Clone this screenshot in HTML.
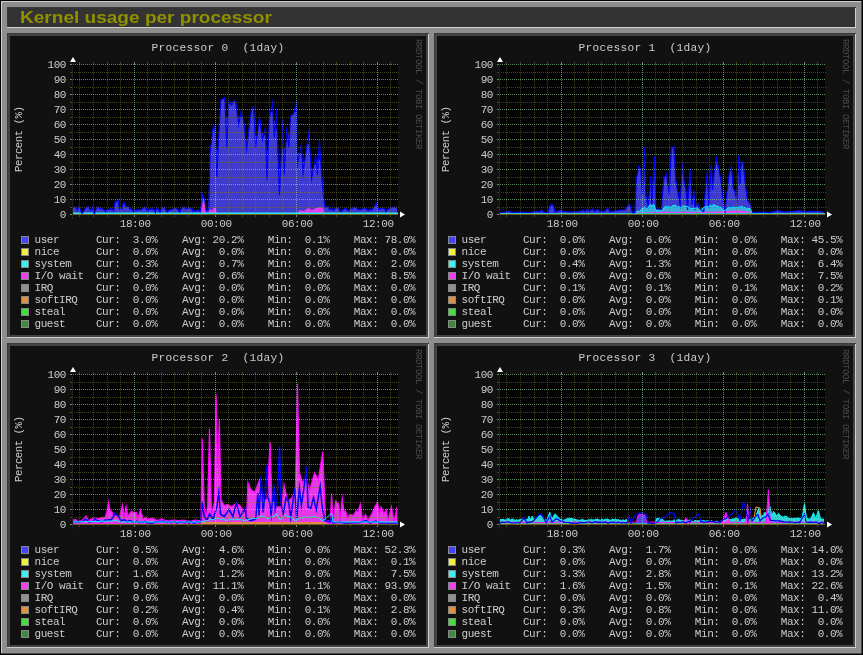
<!DOCTYPE html>
<html><head><meta charset="utf-8"><style>
html,body{margin:0;padding:0;background:#000;width:863px;height:655px;overflow:hidden}
svg.main{display:block;will-change:transform}
text{font-family:"Liberation Mono",monospace}
</style></head><body>
<svg class="main" width="863" height="655" viewBox="0 0 863 655">
<rect x="0" y="0" width="863" height="655" fill="#000"/>
<rect x="1" y="1" width="861" height="653" fill="#8e8e8e"/>
<rect x="1" y="1" width="860" height="1" fill="#cfcfcf"/>
<rect x="1" y="1" width="1" height="652" fill="#cfcfcf"/>
<rect x="861" y="1" width="1" height="653" fill="#4a4a4a"/>
<rect x="1" y="653" width="861" height="1" fill="#4a4a4a"/>
<rect x="7" y="7" width="849" height="21" fill="#333333"/>
<rect x="7" y="7" width="849" height="1" fill="#3a3a3a"/>
<rect x="7" y="7" width="1" height="21" fill="#3a3a3a"/>
<rect x="7" y="27" width="849" height="1" fill="#cfcfcf"/>
<rect x="855" y="8" width="1" height="20" fill="#cfcfcf"/>
<text transform="translate(20,23) scale(1.095,1)" x="0" y="0" style="font-family:'Liberation Sans',sans-serif" font-weight="bold" font-size="17.4" fill="#919100">Kernel usage per processor</text>
<rect x="7" y="33" width="422" height="305" fill="#444444"/>
<rect x="7" y="33" width="422" height="1" fill="#3a3a3a"/>
<rect x="7" y="33" width="1" height="305" fill="#3a3a3a"/>
<rect x="7" y="337" width="422" height="1" fill="#cfcfcf"/>
<rect x="428" y="34" width="1" height="304" fill="#cfcfcf"/>
<rect x="10" y="36" width="416" height="299" fill="#111111"/>
<rect x="73" y="64" width="325" height="151" fill="#030303"/>
<svg x="73" y="63" width="325" height="152" viewBox="73 63 325 152" overflow="hidden">
<polygon points="73.0,215.0 73.0,206.0 73.0,207.0 74.5,207.4 75.7,207.4 76.0,208.0 77.3,210.3 77.5,209.6 79.0,206.6 79.3,207.0 80.5,210.1 82.0,213.5 82.2,213.5 83.5,211.1 84.6,209.5 85.0,208.9 86.5,206.9 87.4,207.0 88.0,206.3 89.5,208.8 90.3,210.3 91.0,209.6 92.5,207.1 92.7,208.2 94.0,213.3 94.3,214.0 95.5,210.1 96.8,207.8 97.0,206.9 98.5,206.6 100.0,208.9 101.5,208.4 102.4,208.2 103.0,209.4 104.5,210.3 105.7,211.5 106.0,210.0 107.5,210.0 109.0,209.6 110.5,208.0 111.4,208.7 112.0,209.8 113.5,209.5 113.8,210.3 115.0,202.6 115.4,201.4 116.5,201.4 117.9,200.5 118.0,199.9 119.5,209.4 119.5,208.7 121.0,208.5 121.9,209.0 122.5,206.3 123.5,202.2 124.0,202.5 125.5,205.7 126.0,207.0 127.0,206.4 128.5,206.6 130.0,209.0 130.8,208.7 131.5,208.5 133.0,211.2 134.0,211.9 134.5,210.5 136.0,210.9 137.3,209.0 137.5,209.7 139.0,209.9 140.0,210.0 140.5,210.0 142.0,208.7 143.5,208.1 144.5,207.2 145.0,206.7 146.5,209.4 147.3,210.8 148.0,210.9 149.5,208.6 151.0,209.4 152.2,208.0 152.5,209.0 154.0,210.0 155.4,212.4 155.5,211.5 157.0,207.6 157.0,208.0 158.5,209.6 159.5,211.6 160.0,212.0 161.5,209.2 163.0,207.1 163.9,207.6 164.5,207.2 166.0,210.4 166.8,211.2 167.5,211.8 169.0,210.1 170.0,210.0 170.5,209.5 172.0,209.0 173.5,208.9 174.0,208.4 175.0,207.6 176.5,208.7 177.3,208.8 178.0,209.6 179.5,211.7 179.7,212.0 181.0,209.3 182.5,207.3 183.4,207.2 184.0,206.8 185.5,208.8 187.0,208.2 187.0,208.8 188.5,208.4 190.0,207.4 190.3,208.0 191.5,208.2 192.7,210.8 193.0,209.5 194.5,211.1 196.0,210.9 197.5,209.9 198.4,210.4 199.0,210.9 200.4,211.6 200.5,210.9 202.0,199.0 202.5,194.2 203.5,197.2 204.9,199.5 205.0,199.9 206.1,210.0 206.5,210.7 208.0,210.0 208.1,209.2 208.1,202.6 208.6,202.6 209.1,175.3 209.6,175.3 210.1,152.6 210.6,148.3 211.1,144.0 211.6,139.7 212.1,135.4 212.6,131.1 213.1,128.5 213.6,128.5 214.1,128.5 214.6,128.5 215.1,128.5 215.6,142.8 216.1,149.5 216.6,149.5 217.1,149.5 217.6,149.5 218.1,149.5 218.6,138.9 219.1,129.5 219.6,120.8 220.1,112.1 220.6,103.5 221.1,99.8 221.6,99.5 222.1,99.2 222.6,98.9 223.1,98.9 223.6,98.9 224.1,98.9 224.6,98.9 225.1,105.0 225.6,117.5 226.1,117.5 226.6,117.5 227.1,117.5 227.6,117.5 228.1,117.3 228.6,105.7 229.1,104.2 229.6,104.2 230.1,104.0 230.6,103.5 231.1,102.8 231.6,102.8 232.1,102.8 232.6,102.7 233.1,101.5 233.6,101.5 234.1,101.5 234.6,101.5 235.1,101.5 235.6,101.9 236.1,105.0 236.6,108.8 237.1,112.6 237.6,116.4 238.1,116.8 238.6,116.8 239.1,116.8 239.6,116.8 240.1,116.8 240.6,116.7 241.1,116.7 241.6,116.7 242.1,116.7 242.6,116.7 243.1,118.3 243.6,119.8 244.1,124.8 244.6,129.7 245.1,134.7 245.6,139.7 246.1,139.7 246.6,139.7 247.1,139.7 247.6,139.7 248.1,136.2 248.6,131.7 249.1,127.9 249.6,124.1 250.1,120.3 250.6,116.5 251.1,112.7 251.6,108.9 252.1,108.9 252.6,108.9 253.1,108.9 253.6,108.9 254.1,117.1 254.6,127.2 255.1,135.8 255.6,135.8 256.1,135.8 256.6,135.8 257.1,135.8 257.6,131.8 258.1,127.9 258.6,125.2 259.1,125.2 259.6,125.2 260.1,125.2 260.6,125.2 261.1,129.0 261.6,132.8 262.1,133.3 262.6,133.3 263.1,133.3 263.6,133.3 264.1,135.2 264.6,135.2 265.1,135.2 265.6,135.2 266.1,149.9 266.6,149.9 267.1,149.9 267.6,149.9 268.1,149.9 268.6,139.1 269.1,127.3 269.6,117.3 270.1,114.7 270.6,112.1 271.1,112.1 271.6,112.1 272.1,112.1 272.6,112.1 273.1,115.1 273.6,120.4 274.1,120.4 274.6,120.4 275.1,123.8 275.6,127.6 276.1,129.0 276.6,129.0 277.1,129.0 277.6,143.4 278.1,157.8 278.6,169.0 279.1,169.0 279.6,169.0 280.1,169.0 280.6,169.0 281.1,158.1 281.6,148.8 282.1,148.8 282.6,148.8 283.1,148.8 283.6,148.2 284.1,148.2 284.6,148.2 285.1,148.2 285.6,148.2 286.1,141.6 286.6,141.6 287.1,141.0 287.6,138.8 288.1,136.6 288.6,132.7 289.1,132.7 289.6,132.7 290.1,124.3 290.6,116.0 291.1,115.7 291.6,115.3 292.1,115.0 292.6,114.6 293.1,114.3 293.6,113.6 294.1,111.7 294.6,111.7 295.1,111.7 295.6,111.7 296.1,111.7 296.6,122.0 297.1,152.7 297.6,153.1 298.1,153.1 298.6,153.1 299.1,153.1 299.6,153.1 300.1,153.1 300.6,153.1 301.1,153.1 301.6,153.1 302.1,158.0 302.6,161.7 303.1,161.7 303.6,161.7 304.1,161.7 304.6,161.7 305.1,158.1 305.6,154.4 306.1,150.8 306.6,147.6 307.1,144.3 307.6,144.3 308.1,144.3 308.6,144.3 309.1,144.3 309.6,145.8 310.1,153.6 310.6,161.4 311.1,169.1 311.6,169.1 312.1,169.1 312.6,169.1 313.1,169.1 313.6,167.2 314.1,164.3 314.6,164.3 315.1,164.3 315.6,164.3 316.1,163.7 316.6,161.3 317.1,160.5 317.6,160.5 318.1,160.5 318.6,159.5 319.1,159.5 319.6,159.5 320.1,159.5 320.6,159.5 321.1,167.6 321.6,174.3 322.1,180.2 322.6,186.1 323.1,192.0 323.6,197.9 324.1,197.9 324.6,203.8 325.1,203.8 325.1,207.9 325.1,207.2 326.6,206.7 328.1,206.9 329.3,208.7 329.6,209.7 331.1,208.6 332.6,209.3 333.0,210.6 334.1,209.8 335.6,207.9 337.1,207.9 337.1,207.3 338.6,207.9 340.1,211.0 341.3,211.5 341.6,210.5 343.1,209.6 344.6,208.9 345.0,207.8 346.1,208.8 347.6,210.4 348.7,210.6 349.1,210.5 350.6,208.0 352.1,208.8 353.4,207.3 353.6,207.3 355.1,207.3 356.6,207.7 358.1,209.9 358.9,209.7 359.6,209.4 361.1,209.7 362.6,208.8 364.1,208.7 364.5,207.8 365.6,208.5 367.1,209.9 368.2,210.6 368.6,210.4 370.1,209.0 371.6,209.9 372.8,208.7 373.1,207.5 374.6,205.8 376.1,203.4 376.1,202.7 377.6,207.3 378.4,209.7 379.1,208.3 380.6,209.0 382.1,207.9 382.1,207.8 383.6,208.3 385.1,209.5 385.8,211.5 386.6,210.6 388.1,208.3 389.6,209.1 390.4,207.8 391.1,207.5 392.6,207.3 394.1,206.9 395.1,207.3 395.6,207.5 397.0,207.8 397.0,215.0" fill="#4641e6" fill-opacity="0.9"/>
<polygon points="200.0,215.0 200.0,214.0 202.0,205.0 203.5,199.0 205.0,206.0 206.0,214.0 206.0,215.0" fill="#f03cf0" fill-opacity="0.95"/>
<polygon points="208.0,215.0 208.0,214.0 210.0,209.0 212.0,211.0 214.0,207.0 216.0,209.0 217.0,214.0 217.0,215.0" fill="#f03cf0" fill-opacity="0.95"/>
<polygon points="296.0,215.0 296.0,214.0 300.0,210.0 304.0,211.0 308.0,208.0 312.0,210.0 316.0,208.0 320.0,207.0 323.0,208.0 325.0,214.0 325.0,215.0" fill="#f03cf0" fill-opacity="0.95"/>
<rect x="73" y="212" width="325" height="1" fill="rgba(48,232,232,0.5)"/>
<rect x="73" y="213" width="325" height="1" fill="#30e8e8"/>
<polyline points="73.0,206.0 73.0,207.0 74.5,207.4 75.7,207.4 76.0,208.0 77.3,210.3 77.5,209.6 79.0,206.6 79.3,207.0 80.5,210.1 82.0,213.5 82.2,213.5 83.5,211.1 84.6,209.5 85.0,208.9 86.5,206.9 87.4,207.0 88.0,206.3 89.5,208.8 90.3,210.3 91.0,209.6 92.5,207.1 92.7,208.2 94.0,213.3 94.3,214.0 95.5,210.1 96.8,207.8 97.0,206.9 98.5,206.6 100.0,208.9 101.5,208.4 102.4,208.2 103.0,209.4 104.5,210.3 105.7,211.5 106.0,210.0 107.5,210.0 109.0,209.6 110.5,208.0 111.4,208.7 112.0,209.8 113.5,209.5 113.8,210.3 115.0,202.6 115.4,201.4 116.5,201.4 117.9,200.5 118.0,199.9 119.5,209.4 119.5,208.7 121.0,208.5 121.9,209.0 122.5,206.3 123.5,202.2 124.0,202.5 125.5,205.7 126.0,207.0 127.0,206.4 128.5,206.6 130.0,209.0 130.8,208.7 131.5,208.5 133.0,211.2 134.0,211.9 134.5,210.5 136.0,210.9 137.3,209.0 137.5,209.7 139.0,209.9 140.0,210.0 140.5,210.0 142.0,208.7 143.5,208.1 144.5,207.2 145.0,206.7 146.5,209.4 147.3,210.8 148.0,210.9 149.5,208.6 151.0,209.4 152.2,208.0 152.5,209.0 154.0,210.0 155.4,212.4 155.5,211.5 157.0,207.6 157.0,208.0 158.5,209.6 159.5,211.6 160.0,212.0 161.5,209.2 163.0,207.1 163.9,207.6 164.5,207.2 166.0,210.4 166.8,211.2 167.5,211.8 169.0,210.1 170.0,210.0 170.5,209.5 172.0,209.0 173.5,208.9 174.0,208.4 175.0,207.6 176.5,208.7 177.3,208.8 178.0,209.6 179.5,211.7 179.7,212.0 181.0,209.3 182.5,207.3 183.4,207.2 184.0,206.8 185.5,208.8 187.0,208.2 187.0,208.8 188.5,208.4 190.0,207.4 190.3,208.0 191.5,208.2 192.7,210.8 193.0,209.5 194.5,211.1 196.0,210.9 197.5,209.9 198.4,210.4 199.0,210.9 200.4,211.6 200.5,210.9 202.0,199.0 202.5,194.2 203.5,197.2 204.9,199.5 205.0,199.9 206.1,210.0 206.5,210.7 208.0,210.0 208.1,209.2 209.0,208.0 210.0,153.5 213.0,127.7 215.0,125.7 216.8,177.0 218.8,134.7 220.8,100.0 224.8,97.5 226.8,147.6 228.8,101.0 231.7,105.0 233.7,100.0 235.7,102.0 238.7,124.7 241.0,111.8 243.6,119.8 246.6,149.6 248.6,131.7 251.6,108.9 253.6,106.9 255.6,147.6 259.5,116.8 262.5,139.6 265.5,127.7 266.9,179.4 269.5,117.8 272.4,102.9 274.4,137.7 276.4,108.9 279.4,195.2 282.9,118.8 284.2,174.6 286.7,127.5 288.7,147.7 290.6,116.0 293.5,114.0 296.3,103.5 297.3,165.0 301.2,144.8 303.1,172.7 306.0,151.5 308.8,133.3 311.7,178.5 315.6,155.4 317.5,174.6 319.4,140.0 321.3,170.8 324.2,205.0 325.1,207.2 325.1,207.9 325.1,207.2 326.6,206.7 328.1,206.9 329.3,208.7 329.6,209.7 331.1,208.6 332.6,209.3 333.0,210.6 334.1,209.8 335.6,207.9 337.1,207.9 337.1,207.3 338.6,207.9 340.1,211.0 341.3,211.5 341.6,210.5 343.1,209.6 344.6,208.9 345.0,207.8 346.1,208.8 347.6,210.4 348.7,210.6 349.1,210.5 350.6,208.0 352.1,208.8 353.4,207.3 353.6,207.3 355.1,207.3 356.6,207.7 358.1,209.9 358.9,209.7 359.6,209.4 361.1,209.7 362.6,208.8 364.1,208.7 364.5,207.8 365.6,208.5 367.1,209.9 368.2,210.6 368.6,210.4 370.1,209.0 371.6,209.9 372.8,208.7 373.1,207.5 374.6,205.8 376.1,203.4 376.1,202.7 377.6,207.3 378.4,209.7 379.1,208.3 380.6,209.0 382.1,207.9 382.1,207.8 383.6,208.3 385.1,209.5 385.8,211.5 386.6,210.6 388.1,208.3 389.6,209.1 390.4,207.8 391.1,207.5 392.6,207.3 394.1,206.9 395.1,207.3 395.6,207.5 397.0,207.8" fill="none" stroke="#0000f0" stroke-width="1.2" stroke-linejoin="miter" stroke-miterlimit="10"/>
</svg>
<rect x="73" y="214" width="325" height="1" fill="#6e5f19"/>
<g shape-rendering="crispEdges">
<line x1="74" y1="207.5" x2="399" y2="207.5" stroke="rgba(128,126,50,0.5)" stroke-dasharray="1 1"/>
<rect x="70" y="207" width="2" height="1" fill="rgba(128,126,50,0.5)"/>
<line x1="74" y1="192.5" x2="399" y2="192.5" stroke="rgba(128,126,50,0.5)" stroke-dasharray="1 1"/>
<rect x="70" y="192" width="2" height="1" fill="rgba(128,126,50,0.5)"/>
<line x1="74" y1="177.5" x2="399" y2="177.5" stroke="rgba(128,126,50,0.5)" stroke-dasharray="1 1"/>
<rect x="70" y="177" width="2" height="1" fill="rgba(128,126,50,0.5)"/>
<line x1="74" y1="162.5" x2="399" y2="162.5" stroke="rgba(128,126,50,0.5)" stroke-dasharray="1 1"/>
<rect x="70" y="162" width="2" height="1" fill="rgba(128,126,50,0.5)"/>
<line x1="74" y1="147.5" x2="399" y2="147.5" stroke="rgba(128,126,50,0.5)" stroke-dasharray="1 1"/>
<rect x="70" y="147" width="2" height="1" fill="rgba(128,126,50,0.5)"/>
<line x1="74" y1="132.5" x2="399" y2="132.5" stroke="rgba(128,126,50,0.5)" stroke-dasharray="1 1"/>
<rect x="70" y="132" width="2" height="1" fill="rgba(128,126,50,0.5)"/>
<line x1="74" y1="117.5" x2="399" y2="117.5" stroke="rgba(128,126,50,0.5)" stroke-dasharray="1 1"/>
<rect x="70" y="117" width="2" height="1" fill="rgba(128,126,50,0.5)"/>
<line x1="74" y1="102.5" x2="399" y2="102.5" stroke="rgba(128,126,50,0.5)" stroke-dasharray="1 1"/>
<rect x="70" y="102" width="2" height="1" fill="rgba(128,126,50,0.5)"/>
<line x1="74" y1="87.5" x2="399" y2="87.5" stroke="rgba(128,126,50,0.5)" stroke-dasharray="1 1"/>
<rect x="70" y="87" width="2" height="1" fill="rgba(128,126,50,0.5)"/>
<line x1="74" y1="72.5" x2="399" y2="72.5" stroke="rgba(128,126,50,0.5)" stroke-dasharray="1 1"/>
<rect x="70" y="72" width="2" height="1" fill="rgba(128,126,50,0.5)"/>
<line x1="79.5" y1="64" x2="79.5" y2="214" stroke="rgba(128,126,50,0.5)" stroke-dasharray="1 1"/>
<rect x="79" y="62" width="1" height="2" fill="rgba(128,126,50,0.5)"/>
<rect x="79" y="215" width="1" height="2" fill="rgba(128,126,50,0.5)"/>
<line x1="93.5" y1="64" x2="93.5" y2="214" stroke="rgba(128,126,50,0.5)" stroke-dasharray="1 1"/>
<rect x="93" y="62" width="1" height="2" fill="rgba(128,126,50,0.5)"/>
<rect x="93" y="215" width="1" height="2" fill="rgba(128,126,50,0.5)"/>
<line x1="107.5" y1="64" x2="107.5" y2="214" stroke="rgba(128,126,50,0.5)" stroke-dasharray="1 1"/>
<rect x="107" y="62" width="1" height="2" fill="rgba(128,126,50,0.5)"/>
<rect x="107" y="215" width="1" height="2" fill="rgba(128,126,50,0.5)"/>
<line x1="120.5" y1="64" x2="120.5" y2="214" stroke="rgba(128,126,50,0.5)" stroke-dasharray="1 1"/>
<rect x="120" y="62" width="1" height="2" fill="rgba(128,126,50,0.5)"/>
<rect x="120" y="215" width="1" height="2" fill="rgba(128,126,50,0.5)"/>
<line x1="147.5" y1="64" x2="147.5" y2="214" stroke="rgba(128,126,50,0.5)" stroke-dasharray="1 1"/>
<rect x="147" y="62" width="1" height="2" fill="rgba(128,126,50,0.5)"/>
<rect x="147" y="215" width="1" height="2" fill="rgba(128,126,50,0.5)"/>
<line x1="161.5" y1="64" x2="161.5" y2="214" stroke="rgba(128,126,50,0.5)" stroke-dasharray="1 1"/>
<rect x="161" y="62" width="1" height="2" fill="rgba(128,126,50,0.5)"/>
<rect x="161" y="215" width="1" height="2" fill="rgba(128,126,50,0.5)"/>
<line x1="174.5" y1="64" x2="174.5" y2="214" stroke="rgba(128,126,50,0.5)" stroke-dasharray="1 1"/>
<rect x="174" y="62" width="1" height="2" fill="rgba(128,126,50,0.5)"/>
<rect x="174" y="215" width="1" height="2" fill="rgba(128,126,50,0.5)"/>
<line x1="188.5" y1="64" x2="188.5" y2="214" stroke="rgba(128,126,50,0.5)" stroke-dasharray="1 1"/>
<rect x="188" y="62" width="1" height="2" fill="rgba(128,126,50,0.5)"/>
<rect x="188" y="215" width="1" height="2" fill="rgba(128,126,50,0.5)"/>
<line x1="201.5" y1="64" x2="201.5" y2="214" stroke="rgba(128,126,50,0.5)" stroke-dasharray="1 1"/>
<rect x="201" y="62" width="1" height="2" fill="rgba(128,126,50,0.5)"/>
<rect x="201" y="215" width="1" height="2" fill="rgba(128,126,50,0.5)"/>
<line x1="228.5" y1="64" x2="228.5" y2="214" stroke="rgba(128,126,50,0.5)" stroke-dasharray="1 1"/>
<rect x="228" y="62" width="1" height="2" fill="rgba(128,126,50,0.5)"/>
<rect x="228" y="215" width="1" height="2" fill="rgba(128,126,50,0.5)"/>
<line x1="242.5" y1="64" x2="242.5" y2="214" stroke="rgba(128,126,50,0.5)" stroke-dasharray="1 1"/>
<rect x="242" y="62" width="1" height="2" fill="rgba(128,126,50,0.5)"/>
<rect x="242" y="215" width="1" height="2" fill="rgba(128,126,50,0.5)"/>
<line x1="255.5" y1="64" x2="255.5" y2="214" stroke="rgba(128,126,50,0.5)" stroke-dasharray="1 1"/>
<rect x="255" y="62" width="1" height="2" fill="rgba(128,126,50,0.5)"/>
<rect x="255" y="215" width="1" height="2" fill="rgba(128,126,50,0.5)"/>
<line x1="269.5" y1="64" x2="269.5" y2="214" stroke="rgba(128,126,50,0.5)" stroke-dasharray="1 1"/>
<rect x="269" y="62" width="1" height="2" fill="rgba(128,126,50,0.5)"/>
<rect x="269" y="215" width="1" height="2" fill="rgba(128,126,50,0.5)"/>
<line x1="282.5" y1="64" x2="282.5" y2="214" stroke="rgba(128,126,50,0.5)" stroke-dasharray="1 1"/>
<rect x="282" y="62" width="1" height="2" fill="rgba(128,126,50,0.5)"/>
<rect x="282" y="215" width="1" height="2" fill="rgba(128,126,50,0.5)"/>
<line x1="309.5" y1="64" x2="309.5" y2="214" stroke="rgba(128,126,50,0.5)" stroke-dasharray="1 1"/>
<rect x="309" y="62" width="1" height="2" fill="rgba(128,126,50,0.5)"/>
<rect x="309" y="215" width="1" height="2" fill="rgba(128,126,50,0.5)"/>
<line x1="323.5" y1="64" x2="323.5" y2="214" stroke="rgba(128,126,50,0.5)" stroke-dasharray="1 1"/>
<rect x="323" y="62" width="1" height="2" fill="rgba(128,126,50,0.5)"/>
<rect x="323" y="215" width="1" height="2" fill="rgba(128,126,50,0.5)"/>
<line x1="336.5" y1="64" x2="336.5" y2="214" stroke="rgba(128,126,50,0.5)" stroke-dasharray="1 1"/>
<rect x="336" y="62" width="1" height="2" fill="rgba(128,126,50,0.5)"/>
<rect x="336" y="215" width="1" height="2" fill="rgba(128,126,50,0.5)"/>
<line x1="350.5" y1="64" x2="350.5" y2="214" stroke="rgba(128,126,50,0.5)" stroke-dasharray="1 1"/>
<rect x="350" y="62" width="1" height="2" fill="rgba(128,126,50,0.5)"/>
<rect x="350" y="215" width="1" height="2" fill="rgba(128,126,50,0.5)"/>
<line x1="363.5" y1="64" x2="363.5" y2="214" stroke="rgba(128,126,50,0.5)" stroke-dasharray="1 1"/>
<rect x="363" y="62" width="1" height="2" fill="rgba(128,126,50,0.5)"/>
<rect x="363" y="215" width="1" height="2" fill="rgba(128,126,50,0.5)"/>
<line x1="390.5" y1="64" x2="390.5" y2="214" stroke="rgba(128,126,50,0.5)" stroke-dasharray="1 1"/>
<rect x="390" y="62" width="1" height="2" fill="rgba(128,126,50,0.5)"/>
<rect x="390" y="215" width="1" height="2" fill="rgba(128,126,50,0.5)"/>
<line x1="73" y1="199.5" x2="399" y2="199.5" stroke="rgba(160,240,172,0.56)" stroke-dasharray="1 1"/>
<rect x="70" y="199" width="2" height="1" fill="rgba(160,240,172,0.56)"/>
<line x1="73" y1="184.5" x2="399" y2="184.5" stroke="rgba(160,240,172,0.56)" stroke-dasharray="1 1"/>
<rect x="70" y="184" width="2" height="1" fill="rgba(160,240,172,0.56)"/>
<line x1="73" y1="169.5" x2="399" y2="169.5" stroke="rgba(160,240,172,0.56)" stroke-dasharray="1 1"/>
<rect x="70" y="169" width="2" height="1" fill="rgba(160,240,172,0.56)"/>
<line x1="73" y1="154.5" x2="399" y2="154.5" stroke="rgba(160,240,172,0.56)" stroke-dasharray="1 1"/>
<rect x="70" y="154" width="2" height="1" fill="rgba(160,240,172,0.56)"/>
<line x1="73" y1="139.5" x2="399" y2="139.5" stroke="rgba(160,240,172,0.56)" stroke-dasharray="1 1"/>
<rect x="70" y="139" width="2" height="1" fill="rgba(160,240,172,0.56)"/>
<line x1="73" y1="124.5" x2="399" y2="124.5" stroke="rgba(160,240,172,0.56)" stroke-dasharray="1 1"/>
<rect x="70" y="124" width="2" height="1" fill="rgba(160,240,172,0.56)"/>
<line x1="73" y1="109.5" x2="399" y2="109.5" stroke="rgba(160,240,172,0.56)" stroke-dasharray="1 1"/>
<rect x="70" y="109" width="2" height="1" fill="rgba(160,240,172,0.56)"/>
<line x1="73" y1="94.5" x2="399" y2="94.5" stroke="rgba(160,240,172,0.56)" stroke-dasharray="1 1"/>
<rect x="70" y="94" width="2" height="1" fill="rgba(160,240,172,0.56)"/>
<line x1="73" y1="79.5" x2="399" y2="79.5" stroke="rgba(160,240,172,0.56)" stroke-dasharray="1 1"/>
<rect x="70" y="79" width="2" height="1" fill="rgba(160,240,172,0.56)"/>
<line x1="73" y1="64.5" x2="399" y2="64.5" stroke="rgba(160,240,172,0.56)" stroke-dasharray="1 1"/>
<rect x="70" y="64" width="2" height="1" fill="rgba(160,240,172,0.56)"/>
<rect x="70" y="214" width="2" height="1" fill="rgba(160,240,172,0.56)"/>
<line x1="134.5" y1="64" x2="134.5" y2="214" stroke="rgba(160,240,172,0.56)" stroke-dasharray="1 1"/>
<rect x="134" y="62" width="1" height="2" fill="rgba(160,240,172,0.56)"/>
<rect x="134" y="215" width="1" height="2" fill="rgba(160,240,172,0.56)"/>
<line x1="215.5" y1="64" x2="215.5" y2="214" stroke="rgba(160,240,172,0.56)" stroke-dasharray="1 1"/>
<rect x="215" y="62" width="1" height="2" fill="rgba(160,240,172,0.56)"/>
<rect x="215" y="215" width="1" height="2" fill="rgba(160,240,172,0.56)"/>
<line x1="296.5" y1="64" x2="296.5" y2="214" stroke="rgba(160,240,172,0.56)" stroke-dasharray="1 1"/>
<rect x="296" y="62" width="1" height="2" fill="rgba(160,240,172,0.56)"/>
<rect x="296" y="215" width="1" height="2" fill="rgba(160,240,172,0.56)"/>
<line x1="377.5" y1="64" x2="377.5" y2="214" stroke="rgba(160,240,172,0.56)" stroke-dasharray="1 1"/>
<rect x="377" y="62" width="1" height="2" fill="rgba(160,240,172,0.56)"/>
<rect x="377" y="215" width="1" height="2" fill="rgba(160,240,172,0.56)"/>
</g>
<rect x="72" y="66" width="1" height="153" fill="#222"/>
<polygon points="70,62 76,62 73,57" fill="#fff"/>
<polygon points="400,211.5 400,217.5 405,214.5" fill="#fff"/>
<text x="66" y="218" text-anchor="end" font-family="Liberation Mono" font-size="11" letter-spacing="-0.46" fill="#cccccc">0</text>
<text x="66" y="203" text-anchor="end" font-family="Liberation Mono" font-size="11" letter-spacing="-0.46" fill="#cccccc">10</text>
<text x="66" y="188" text-anchor="end" font-family="Liberation Mono" font-size="11" letter-spacing="-0.46" fill="#cccccc">20</text>
<text x="66" y="173" text-anchor="end" font-family="Liberation Mono" font-size="11" letter-spacing="-0.46" fill="#cccccc">30</text>
<text x="66" y="158" text-anchor="end" font-family="Liberation Mono" font-size="11" letter-spacing="-0.46" fill="#cccccc">40</text>
<text x="66" y="143" text-anchor="end" font-family="Liberation Mono" font-size="11" letter-spacing="-0.46" fill="#cccccc">50</text>
<text x="66" y="128" text-anchor="end" font-family="Liberation Mono" font-size="11" letter-spacing="-0.46" fill="#cccccc">60</text>
<text x="66" y="113" text-anchor="end" font-family="Liberation Mono" font-size="11" letter-spacing="-0.46" fill="#cccccc">70</text>
<text x="66" y="98" text-anchor="end" font-family="Liberation Mono" font-size="11" letter-spacing="-0.46" fill="#cccccc">80</text>
<text x="66" y="83" text-anchor="end" font-family="Liberation Mono" font-size="11" letter-spacing="-0.46" fill="#cccccc">90</text>
<text x="66" y="68" text-anchor="end" font-family="Liberation Mono" font-size="11" letter-spacing="-0.46" fill="#cccccc">100</text>
<text x="135.2" y="227" text-anchor="middle" font-family="Liberation Mono" font-size="11" letter-spacing="-0.46" fill="#cccccc">18:00</text>
<text x="216.2" y="227" text-anchor="middle" font-family="Liberation Mono" font-size="11" letter-spacing="-0.46" fill="#cccccc">00:00</text>
<text x="297.2" y="227" text-anchor="middle" font-family="Liberation Mono" font-size="11" letter-spacing="-0.46" fill="#cccccc">06:00</text>
<text x="378.2" y="227" text-anchor="middle" font-family="Liberation Mono" font-size="11" letter-spacing="-0.46" fill="#cccccc">12:00</text>
<text x="218" y="51" text-anchor="middle" font-family="Liberation Mono" font-size="11.2" letter-spacing="0.28" fill="#cccccc" xml:space="preserve">Processor 0  (1day)</text>
<text transform="translate(21.7,139.3) rotate(-90)" text-anchor="middle" font-family="Liberation Mono" font-size="10.8" letter-spacing="-0.55" fill="#cccccc" xml:space="preserve">Percent (%)</text>
<text transform="translate(416,39) rotate(90)" font-family="Liberation Mono" font-size="9" letter-spacing="-0.4" fill="#4a4a4a">RRDTOOL / TOBI OETIKER</text>
<rect x="21.5" y="236.5" width="7" height="7" fill="#4444ff" stroke="#888" stroke-width="1"/>
<text x="34.5" y="243" font-family="Liberation Mono" font-size="11" letter-spacing="-0.46" fill="#cccccc" xml:space="preserve">user      Cur:  3.0%    Avg: 20.2%    Min:  0.1%    Max: 78.0%</text>
<rect x="21.5" y="248.5" width="7" height="7" fill="#f0f040" stroke="#888" stroke-width="1"/>
<text x="34.5" y="255" font-family="Liberation Mono" font-size="11" letter-spacing="-0.46" fill="#cccccc" xml:space="preserve">nice      Cur:  0.0%    Avg:  0.0%    Min:  0.0%    Max:  0.0%</text>
<rect x="21.5" y="260.5" width="7" height="7" fill="#40f0f0" stroke="#888" stroke-width="1"/>
<text x="34.5" y="267" font-family="Liberation Mono" font-size="11" letter-spacing="-0.46" fill="#cccccc" xml:space="preserve">system    Cur:  0.3%    Avg:  0.7%    Min:  0.0%    Max:  2.0%</text>
<rect x="21.5" y="272.5" width="7" height="7" fill="#f040f0" stroke="#888" stroke-width="1"/>
<text x="34.5" y="279" font-family="Liberation Mono" font-size="11" letter-spacing="-0.46" fill="#cccccc" xml:space="preserve">I/O wait  Cur:  0.2%    Avg:  0.6%    Min:  0.0%    Max:  8.5%</text>
<rect x="21.5" y="284.5" width="7" height="7" fill="#909090" stroke="#888" stroke-width="1"/>
<text x="34.5" y="291" font-family="Liberation Mono" font-size="11" letter-spacing="-0.46" fill="#cccccc" xml:space="preserve">IRQ       Cur:  0.0%    Avg:  0.0%    Min:  0.0%    Max:  0.0%</text>
<rect x="21.5" y="296.5" width="7" height="7" fill="#e09040" stroke="#888" stroke-width="1"/>
<text x="34.5" y="303" font-family="Liberation Mono" font-size="11" letter-spacing="-0.46" fill="#cccccc" xml:space="preserve">softIRQ   Cur:  0.0%    Avg:  0.0%    Min:  0.0%    Max:  0.0%</text>
<rect x="21.5" y="308.5" width="7" height="7" fill="#40e040" stroke="#888" stroke-width="1"/>
<text x="34.5" y="315" font-family="Liberation Mono" font-size="11" letter-spacing="-0.46" fill="#cccccc" xml:space="preserve">steal     Cur:  0.0%    Avg:  0.0%    Min:  0.0%    Max:  0.0%</text>
<rect x="21.5" y="320.5" width="7" height="7" fill="#408840" stroke="#888" stroke-width="1"/>
<text x="34.5" y="327" font-family="Liberation Mono" font-size="11" letter-spacing="-0.46" fill="#cccccc" xml:space="preserve">guest     Cur:  0.0%    Avg:  0.0%    Min:  0.0%    Max:  0.0%</text>
<rect x="434" y="33" width="422" height="305" fill="#444444"/>
<rect x="434" y="33" width="422" height="1" fill="#3a3a3a"/>
<rect x="434" y="33" width="1" height="305" fill="#3a3a3a"/>
<rect x="434" y="337" width="422" height="1" fill="#cfcfcf"/>
<rect x="855" y="34" width="1" height="304" fill="#cfcfcf"/>
<rect x="437" y="36" width="416" height="299" fill="#111111"/>
<rect x="500" y="64" width="325" height="151" fill="#030303"/>
<svg x="500" y="63" width="325" height="152" viewBox="500 63 325 152" overflow="hidden">
<polygon points="500.0,215.0 500.0,212.5 505.0,212.0 509.0,211.0 512.0,212.5 520.0,212.0 530.0,212.5 537.0,211.0 540.0,211.5 541.7,210.0 543.5,212.0 548.0,212.5 550.0,206.0 551.9,203.9 553.5,206.0 555.0,212.0 560.0,210.5 563.0,211.5 566.0,211.5 570.0,212.0 580.0,211.5 582.5,210.0 585.0,211.5 587.0,209.6 589.0,211.5 592.6,208.8 594.5,211.5 597.6,209.4 600.0,211.5 605.0,211.0 607.6,208.1 610.0,211.5 615.0,211.0 620.0,210.0 625.0,210.0 629.4,203.8 632.5,212.6 635.0,212.6 636.3,178.8 638.8,166.3 640.6,168.8 642.5,195.0 644.4,146.9 645.7,195.0 648.2,206.3 650.7,176.3 651.9,205.0 654.4,156.3 655.7,208.8 661.3,210.0 663.8,178.8 666.3,173.8 669.4,195.0 671.3,148.8 673.8,146.3 675.7,180.0 677.6,191.3 680.1,205.0 682.6,162.5 684.4,185.0 685.7,187.6 687.6,210.0 690.1,168.2 692.0,205.0 693.8,190.0 695.1,208.8 697.6,203.2 700.1,210.0 703.8,211.3 705.6,187.6 707.3,171.3 708.8,207.6 711.3,164.4 712.5,190.0 714.4,171.3 716.3,158.2 718.8,168.8 720.7,180.0 723.2,202.6 725.0,211.3 726.9,193.8 729.4,172.5 731.3,166.3 733.2,187.6 735.0,192.6 736.9,200.1 738.8,155.0 740.0,185.0 741.3,161.9 743.2,163.2 745.7,187.6 747.6,200.1 750.7,205.1 751.9,212.6 762.6,212.0 770.0,212.6 777.6,210.7 785.0,212.0 790.0,211.5 800.0,210.5 805.0,212.0 810.0,211.0 818.0,211.5 824.0,212.0 824.0,215.0" fill="#4641e6" fill-opacity="0.9"/>
<polygon points="636.0,215.0 636.0,213.0 637.0,211.3 638.5,210.9 640.0,211.9 641.5,208.9 643.0,208.2 644.5,206.9 646.0,208.4 647.5,209.8 649.0,205.8 650.5,204.4 652.0,205.8 653.5,204.4 655.0,207.6 656.5,211.4 658.0,210.0 659.5,210.2 661.0,211.0 662.5,210.2 664.0,208.0 665.5,206.2 667.0,207.5 668.5,205.9 670.0,208.0 671.5,206.4 673.0,205.7 674.5,205.2 676.0,205.6 677.5,207.3 679.0,206.6 680.5,207.6 682.0,206.9 683.5,205.6 685.0,206.6 686.5,206.2 688.0,206.8 689.5,207.5 691.0,208.9 692.5,208.5 694.0,208.1 695.5,208.4 697.0,207.9 698.5,208.8 700.0,211.4 701.5,210.0 703.0,207.8 704.5,207.3 706.0,206.6 707.5,207.0 709.0,206.4 710.5,205.2 712.0,206.5 713.5,204.6 715.0,205.1 716.5,206.5 718.0,206.0 719.5,207.5 721.0,207.5 722.5,210.0 724.0,211.3 725.5,209.8 727.0,209.3 728.5,207.3 730.0,207.9 731.5,207.6 733.0,207.4 734.5,207.0 736.0,207.7 737.5,207.8 739.0,206.8 740.5,207.1 742.0,206.0 743.5,207.5 745.0,207.5 746.5,208.7 748.0,208.8 749.5,208.1 751.0,210.5 752.0,213.0 752.0,215.0" fill="#38dede" fill-opacity="0.7"/>
<polygon points="633.0,215.0 633.0,213.0 636.0,212.0 645.0,212.5 655.0,212.0 665.0,211.5 675.0,212.0 685.0,211.5 695.0,212.0 705.0,211.8 715.0,211.5 725.0,211.0 735.0,210.5 745.0,211.0 751.0,212.0 752.0,213.0 752.0,215.0" fill="#f03cf0" fill-opacity="0.95"/>
<rect x="500" y="213" width="325" height="1" fill="#30c8c8"/>
<polyline points="500.0,212.5 505.0,212.0 509.0,211.0 512.0,212.5 520.0,212.0 530.0,212.5 537.0,211.0 540.0,211.5 541.7,210.0 543.5,212.0 548.0,212.5 550.0,206.0 551.9,203.9 553.5,206.0 555.0,212.0 560.0,210.5 563.0,211.5 566.0,211.5 570.0,212.0 580.0,211.5 582.5,210.0 585.0,211.5 587.0,209.6 589.0,211.5 592.6,208.8 594.5,211.5 597.6,209.4 600.0,211.5 605.0,211.0 607.6,208.1 610.0,211.5 615.0,211.0 620.0,210.0 625.0,210.0 629.4,203.8 632.5,212.6 635.0,212.6 636.3,178.8 638.8,166.3 640.6,168.8 642.5,195.0 644.4,146.9 645.7,195.0 648.2,206.3 650.7,176.3 651.9,205.0 654.4,156.3 655.7,208.8 661.3,210.0 663.8,178.8 666.3,173.8 669.4,195.0 671.3,148.8 673.8,146.3 675.7,180.0 677.6,191.3 680.1,205.0 682.6,162.5 684.4,185.0 685.7,187.6 687.6,210.0 690.1,168.2 692.0,205.0 693.8,190.0 695.1,208.8 697.6,203.2 700.1,210.0 703.8,211.3 705.6,187.6 707.3,171.3 708.8,207.6 711.3,164.4 712.5,190.0 714.4,171.3 716.3,158.2 718.8,168.8 720.7,180.0 723.2,202.6 725.0,211.3 726.9,193.8 729.4,172.5 731.3,166.3 733.2,187.6 735.0,192.6 736.9,200.1 738.8,155.0 740.0,185.0 741.3,161.9 743.2,163.2 745.7,187.6 747.6,200.1 750.7,205.1 751.9,212.6 762.6,212.0 770.0,212.6 777.6,210.7 785.0,212.0 790.0,211.5 800.0,210.5 805.0,212.0 810.0,211.0 818.0,211.5 824.0,212.0" fill="none" stroke="#0000f0" stroke-width="1.2" stroke-linejoin="miter" stroke-miterlimit="10"/>
<polyline points="636.0,213.0 637.0,211.3 638.5,210.9 640.0,211.9 641.5,208.9 643.0,208.2 644.5,206.9 646.0,208.4 647.5,209.8 649.0,205.8 650.5,204.4 652.0,205.8 653.5,204.4 655.0,207.6 656.5,211.4 658.0,210.0 659.5,210.2 661.0,211.0 662.5,210.2 664.0,208.0 665.5,206.2 667.0,207.5 668.5,205.9 670.0,208.0 671.5,206.4 673.0,205.7 674.5,205.2 676.0,205.6 677.5,207.3 679.0,206.6 680.5,207.6 682.0,206.9 683.5,205.6 685.0,206.6 686.5,206.2 688.0,206.8 689.5,207.5 691.0,208.9 692.5,208.5 694.0,208.1 695.5,208.4 697.0,207.9 698.5,208.8 700.0,211.4 701.5,210.0 703.0,207.8 704.5,207.3 706.0,206.6 707.5,207.0 709.0,206.4 710.5,205.2 712.0,206.5 713.5,204.6 715.0,205.1 716.5,206.5 718.0,206.0 719.5,207.5 721.0,207.5 722.5,210.0 724.0,211.3 725.5,209.8 727.0,209.3 728.5,207.3 730.0,207.9 731.5,207.6 733.0,207.4 734.5,207.0 736.0,207.7 737.5,207.8 739.0,206.8 740.5,207.1 742.0,206.0 743.5,207.5 745.0,207.5 746.5,208.7 748.0,208.8 749.5,208.1 751.0,210.5 752.0,213.0" fill="none" stroke="#00ffff" stroke-width="1" stroke-linejoin="miter" stroke-miterlimit="10"/>
</svg>
<rect x="500" y="214" width="325" height="1" fill="#6e5f19"/>
<g shape-rendering="crispEdges">
<line x1="501" y1="207.5" x2="826" y2="207.5" stroke="rgba(128,126,50,0.5)" stroke-dasharray="1 1"/>
<rect x="497" y="207" width="2" height="1" fill="rgba(128,126,50,0.5)"/>
<line x1="501" y1="192.5" x2="826" y2="192.5" stroke="rgba(128,126,50,0.5)" stroke-dasharray="1 1"/>
<rect x="497" y="192" width="2" height="1" fill="rgba(128,126,50,0.5)"/>
<line x1="501" y1="177.5" x2="826" y2="177.5" stroke="rgba(128,126,50,0.5)" stroke-dasharray="1 1"/>
<rect x="497" y="177" width="2" height="1" fill="rgba(128,126,50,0.5)"/>
<line x1="501" y1="162.5" x2="826" y2="162.5" stroke="rgba(128,126,50,0.5)" stroke-dasharray="1 1"/>
<rect x="497" y="162" width="2" height="1" fill="rgba(128,126,50,0.5)"/>
<line x1="501" y1="147.5" x2="826" y2="147.5" stroke="rgba(128,126,50,0.5)" stroke-dasharray="1 1"/>
<rect x="497" y="147" width="2" height="1" fill="rgba(128,126,50,0.5)"/>
<line x1="501" y1="132.5" x2="826" y2="132.5" stroke="rgba(128,126,50,0.5)" stroke-dasharray="1 1"/>
<rect x="497" y="132" width="2" height="1" fill="rgba(128,126,50,0.5)"/>
<line x1="501" y1="117.5" x2="826" y2="117.5" stroke="rgba(128,126,50,0.5)" stroke-dasharray="1 1"/>
<rect x="497" y="117" width="2" height="1" fill="rgba(128,126,50,0.5)"/>
<line x1="501" y1="102.5" x2="826" y2="102.5" stroke="rgba(128,126,50,0.5)" stroke-dasharray="1 1"/>
<rect x="497" y="102" width="2" height="1" fill="rgba(128,126,50,0.5)"/>
<line x1="501" y1="87.5" x2="826" y2="87.5" stroke="rgba(128,126,50,0.5)" stroke-dasharray="1 1"/>
<rect x="497" y="87" width="2" height="1" fill="rgba(128,126,50,0.5)"/>
<line x1="501" y1="72.5" x2="826" y2="72.5" stroke="rgba(128,126,50,0.5)" stroke-dasharray="1 1"/>
<rect x="497" y="72" width="2" height="1" fill="rgba(128,126,50,0.5)"/>
<line x1="506.5" y1="64" x2="506.5" y2="214" stroke="rgba(128,126,50,0.5)" stroke-dasharray="1 1"/>
<rect x="506" y="62" width="1" height="2" fill="rgba(128,126,50,0.5)"/>
<rect x="506" y="215" width="1" height="2" fill="rgba(128,126,50,0.5)"/>
<line x1="520.5" y1="64" x2="520.5" y2="214" stroke="rgba(128,126,50,0.5)" stroke-dasharray="1 1"/>
<rect x="520" y="62" width="1" height="2" fill="rgba(128,126,50,0.5)"/>
<rect x="520" y="215" width="1" height="2" fill="rgba(128,126,50,0.5)"/>
<line x1="534.5" y1="64" x2="534.5" y2="214" stroke="rgba(128,126,50,0.5)" stroke-dasharray="1 1"/>
<rect x="534" y="62" width="1" height="2" fill="rgba(128,126,50,0.5)"/>
<rect x="534" y="215" width="1" height="2" fill="rgba(128,126,50,0.5)"/>
<line x1="547.5" y1="64" x2="547.5" y2="214" stroke="rgba(128,126,50,0.5)" stroke-dasharray="1 1"/>
<rect x="547" y="62" width="1" height="2" fill="rgba(128,126,50,0.5)"/>
<rect x="547" y="215" width="1" height="2" fill="rgba(128,126,50,0.5)"/>
<line x1="574.5" y1="64" x2="574.5" y2="214" stroke="rgba(128,126,50,0.5)" stroke-dasharray="1 1"/>
<rect x="574" y="62" width="1" height="2" fill="rgba(128,126,50,0.5)"/>
<rect x="574" y="215" width="1" height="2" fill="rgba(128,126,50,0.5)"/>
<line x1="588.5" y1="64" x2="588.5" y2="214" stroke="rgba(128,126,50,0.5)" stroke-dasharray="1 1"/>
<rect x="588" y="62" width="1" height="2" fill="rgba(128,126,50,0.5)"/>
<rect x="588" y="215" width="1" height="2" fill="rgba(128,126,50,0.5)"/>
<line x1="601.5" y1="64" x2="601.5" y2="214" stroke="rgba(128,126,50,0.5)" stroke-dasharray="1 1"/>
<rect x="601" y="62" width="1" height="2" fill="rgba(128,126,50,0.5)"/>
<rect x="601" y="215" width="1" height="2" fill="rgba(128,126,50,0.5)"/>
<line x1="615.5" y1="64" x2="615.5" y2="214" stroke="rgba(128,126,50,0.5)" stroke-dasharray="1 1"/>
<rect x="615" y="62" width="1" height="2" fill="rgba(128,126,50,0.5)"/>
<rect x="615" y="215" width="1" height="2" fill="rgba(128,126,50,0.5)"/>
<line x1="628.5" y1="64" x2="628.5" y2="214" stroke="rgba(128,126,50,0.5)" stroke-dasharray="1 1"/>
<rect x="628" y="62" width="1" height="2" fill="rgba(128,126,50,0.5)"/>
<rect x="628" y="215" width="1" height="2" fill="rgba(128,126,50,0.5)"/>
<line x1="655.5" y1="64" x2="655.5" y2="214" stroke="rgba(128,126,50,0.5)" stroke-dasharray="1 1"/>
<rect x="655" y="62" width="1" height="2" fill="rgba(128,126,50,0.5)"/>
<rect x="655" y="215" width="1" height="2" fill="rgba(128,126,50,0.5)"/>
<line x1="669.5" y1="64" x2="669.5" y2="214" stroke="rgba(128,126,50,0.5)" stroke-dasharray="1 1"/>
<rect x="669" y="62" width="1" height="2" fill="rgba(128,126,50,0.5)"/>
<rect x="669" y="215" width="1" height="2" fill="rgba(128,126,50,0.5)"/>
<line x1="682.5" y1="64" x2="682.5" y2="214" stroke="rgba(128,126,50,0.5)" stroke-dasharray="1 1"/>
<rect x="682" y="62" width="1" height="2" fill="rgba(128,126,50,0.5)"/>
<rect x="682" y="215" width="1" height="2" fill="rgba(128,126,50,0.5)"/>
<line x1="696.5" y1="64" x2="696.5" y2="214" stroke="rgba(128,126,50,0.5)" stroke-dasharray="1 1"/>
<rect x="696" y="62" width="1" height="2" fill="rgba(128,126,50,0.5)"/>
<rect x="696" y="215" width="1" height="2" fill="rgba(128,126,50,0.5)"/>
<line x1="709.5" y1="64" x2="709.5" y2="214" stroke="rgba(128,126,50,0.5)" stroke-dasharray="1 1"/>
<rect x="709" y="62" width="1" height="2" fill="rgba(128,126,50,0.5)"/>
<rect x="709" y="215" width="1" height="2" fill="rgba(128,126,50,0.5)"/>
<line x1="736.5" y1="64" x2="736.5" y2="214" stroke="rgba(128,126,50,0.5)" stroke-dasharray="1 1"/>
<rect x="736" y="62" width="1" height="2" fill="rgba(128,126,50,0.5)"/>
<rect x="736" y="215" width="1" height="2" fill="rgba(128,126,50,0.5)"/>
<line x1="750.5" y1="64" x2="750.5" y2="214" stroke="rgba(128,126,50,0.5)" stroke-dasharray="1 1"/>
<rect x="750" y="62" width="1" height="2" fill="rgba(128,126,50,0.5)"/>
<rect x="750" y="215" width="1" height="2" fill="rgba(128,126,50,0.5)"/>
<line x1="763.5" y1="64" x2="763.5" y2="214" stroke="rgba(128,126,50,0.5)" stroke-dasharray="1 1"/>
<rect x="763" y="62" width="1" height="2" fill="rgba(128,126,50,0.5)"/>
<rect x="763" y="215" width="1" height="2" fill="rgba(128,126,50,0.5)"/>
<line x1="777.5" y1="64" x2="777.5" y2="214" stroke="rgba(128,126,50,0.5)" stroke-dasharray="1 1"/>
<rect x="777" y="62" width="1" height="2" fill="rgba(128,126,50,0.5)"/>
<rect x="777" y="215" width="1" height="2" fill="rgba(128,126,50,0.5)"/>
<line x1="790.5" y1="64" x2="790.5" y2="214" stroke="rgba(128,126,50,0.5)" stroke-dasharray="1 1"/>
<rect x="790" y="62" width="1" height="2" fill="rgba(128,126,50,0.5)"/>
<rect x="790" y="215" width="1" height="2" fill="rgba(128,126,50,0.5)"/>
<line x1="817.5" y1="64" x2="817.5" y2="214" stroke="rgba(128,126,50,0.5)" stroke-dasharray="1 1"/>
<rect x="817" y="62" width="1" height="2" fill="rgba(128,126,50,0.5)"/>
<rect x="817" y="215" width="1" height="2" fill="rgba(128,126,50,0.5)"/>
<line x1="500" y1="199.5" x2="826" y2="199.5" stroke="rgba(160,240,172,0.56)" stroke-dasharray="1 1"/>
<rect x="497" y="199" width="2" height="1" fill="rgba(160,240,172,0.56)"/>
<line x1="500" y1="184.5" x2="826" y2="184.5" stroke="rgba(160,240,172,0.56)" stroke-dasharray="1 1"/>
<rect x="497" y="184" width="2" height="1" fill="rgba(160,240,172,0.56)"/>
<line x1="500" y1="169.5" x2="826" y2="169.5" stroke="rgba(160,240,172,0.56)" stroke-dasharray="1 1"/>
<rect x="497" y="169" width="2" height="1" fill="rgba(160,240,172,0.56)"/>
<line x1="500" y1="154.5" x2="826" y2="154.5" stroke="rgba(160,240,172,0.56)" stroke-dasharray="1 1"/>
<rect x="497" y="154" width="2" height="1" fill="rgba(160,240,172,0.56)"/>
<line x1="500" y1="139.5" x2="826" y2="139.5" stroke="rgba(160,240,172,0.56)" stroke-dasharray="1 1"/>
<rect x="497" y="139" width="2" height="1" fill="rgba(160,240,172,0.56)"/>
<line x1="500" y1="124.5" x2="826" y2="124.5" stroke="rgba(160,240,172,0.56)" stroke-dasharray="1 1"/>
<rect x="497" y="124" width="2" height="1" fill="rgba(160,240,172,0.56)"/>
<line x1="500" y1="109.5" x2="826" y2="109.5" stroke="rgba(160,240,172,0.56)" stroke-dasharray="1 1"/>
<rect x="497" y="109" width="2" height="1" fill="rgba(160,240,172,0.56)"/>
<line x1="500" y1="94.5" x2="826" y2="94.5" stroke="rgba(160,240,172,0.56)" stroke-dasharray="1 1"/>
<rect x="497" y="94" width="2" height="1" fill="rgba(160,240,172,0.56)"/>
<line x1="500" y1="79.5" x2="826" y2="79.5" stroke="rgba(160,240,172,0.56)" stroke-dasharray="1 1"/>
<rect x="497" y="79" width="2" height="1" fill="rgba(160,240,172,0.56)"/>
<line x1="500" y1="64.5" x2="826" y2="64.5" stroke="rgba(160,240,172,0.56)" stroke-dasharray="1 1"/>
<rect x="497" y="64" width="2" height="1" fill="rgba(160,240,172,0.56)"/>
<rect x="497" y="214" width="2" height="1" fill="rgba(160,240,172,0.56)"/>
<line x1="561.5" y1="64" x2="561.5" y2="214" stroke="rgba(160,240,172,0.56)" stroke-dasharray="1 1"/>
<rect x="561" y="62" width="1" height="2" fill="rgba(160,240,172,0.56)"/>
<rect x="561" y="215" width="1" height="2" fill="rgba(160,240,172,0.56)"/>
<line x1="642.5" y1="64" x2="642.5" y2="214" stroke="rgba(160,240,172,0.56)" stroke-dasharray="1 1"/>
<rect x="642" y="62" width="1" height="2" fill="rgba(160,240,172,0.56)"/>
<rect x="642" y="215" width="1" height="2" fill="rgba(160,240,172,0.56)"/>
<line x1="723.5" y1="64" x2="723.5" y2="214" stroke="rgba(160,240,172,0.56)" stroke-dasharray="1 1"/>
<rect x="723" y="62" width="1" height="2" fill="rgba(160,240,172,0.56)"/>
<rect x="723" y="215" width="1" height="2" fill="rgba(160,240,172,0.56)"/>
<line x1="804.5" y1="64" x2="804.5" y2="214" stroke="rgba(160,240,172,0.56)" stroke-dasharray="1 1"/>
<rect x="804" y="62" width="1" height="2" fill="rgba(160,240,172,0.56)"/>
<rect x="804" y="215" width="1" height="2" fill="rgba(160,240,172,0.56)"/>
</g>
<rect x="499" y="66" width="1" height="153" fill="#222"/>
<polygon points="497,62 503,62 500,57" fill="#fff"/>
<polygon points="827,211.5 827,217.5 832,214.5" fill="#fff"/>
<text x="493" y="218" text-anchor="end" font-family="Liberation Mono" font-size="11" letter-spacing="-0.46" fill="#cccccc">0</text>
<text x="493" y="203" text-anchor="end" font-family="Liberation Mono" font-size="11" letter-spacing="-0.46" fill="#cccccc">10</text>
<text x="493" y="188" text-anchor="end" font-family="Liberation Mono" font-size="11" letter-spacing="-0.46" fill="#cccccc">20</text>
<text x="493" y="173" text-anchor="end" font-family="Liberation Mono" font-size="11" letter-spacing="-0.46" fill="#cccccc">30</text>
<text x="493" y="158" text-anchor="end" font-family="Liberation Mono" font-size="11" letter-spacing="-0.46" fill="#cccccc">40</text>
<text x="493" y="143" text-anchor="end" font-family="Liberation Mono" font-size="11" letter-spacing="-0.46" fill="#cccccc">50</text>
<text x="493" y="128" text-anchor="end" font-family="Liberation Mono" font-size="11" letter-spacing="-0.46" fill="#cccccc">60</text>
<text x="493" y="113" text-anchor="end" font-family="Liberation Mono" font-size="11" letter-spacing="-0.46" fill="#cccccc">70</text>
<text x="493" y="98" text-anchor="end" font-family="Liberation Mono" font-size="11" letter-spacing="-0.46" fill="#cccccc">80</text>
<text x="493" y="83" text-anchor="end" font-family="Liberation Mono" font-size="11" letter-spacing="-0.46" fill="#cccccc">90</text>
<text x="493" y="68" text-anchor="end" font-family="Liberation Mono" font-size="11" letter-spacing="-0.46" fill="#cccccc">100</text>
<text x="562.2" y="227" text-anchor="middle" font-family="Liberation Mono" font-size="11" letter-spacing="-0.46" fill="#cccccc">18:00</text>
<text x="643.2" y="227" text-anchor="middle" font-family="Liberation Mono" font-size="11" letter-spacing="-0.46" fill="#cccccc">00:00</text>
<text x="724.2" y="227" text-anchor="middle" font-family="Liberation Mono" font-size="11" letter-spacing="-0.46" fill="#cccccc">06:00</text>
<text x="805.2" y="227" text-anchor="middle" font-family="Liberation Mono" font-size="11" letter-spacing="-0.46" fill="#cccccc">12:00</text>
<text x="645" y="51" text-anchor="middle" font-family="Liberation Mono" font-size="11.2" letter-spacing="0.28" fill="#cccccc" xml:space="preserve">Processor 1  (1day)</text>
<text transform="translate(448.7,139.3) rotate(-90)" text-anchor="middle" font-family="Liberation Mono" font-size="10.8" letter-spacing="-0.55" fill="#cccccc" xml:space="preserve">Percent (%)</text>
<text transform="translate(843,39) rotate(90)" font-family="Liberation Mono" font-size="9" letter-spacing="-0.4" fill="#4a4a4a">RRDTOOL / TOBI OETIKER</text>
<rect x="448.5" y="236.5" width="7" height="7" fill="#4444ff" stroke="#888" stroke-width="1"/>
<text x="461.5" y="243" font-family="Liberation Mono" font-size="11" letter-spacing="-0.46" fill="#cccccc" xml:space="preserve">user      Cur:  0.0%    Avg:  6.0%    Min:  0.0%    Max: 45.5%</text>
<rect x="448.5" y="248.5" width="7" height="7" fill="#f0f040" stroke="#888" stroke-width="1"/>
<text x="461.5" y="255" font-family="Liberation Mono" font-size="11" letter-spacing="-0.46" fill="#cccccc" xml:space="preserve">nice      Cur:  0.0%    Avg:  0.0%    Min:  0.0%    Max:  0.0%</text>
<rect x="448.5" y="260.5" width="7" height="7" fill="#40f0f0" stroke="#888" stroke-width="1"/>
<text x="461.5" y="267" font-family="Liberation Mono" font-size="11" letter-spacing="-0.46" fill="#cccccc" xml:space="preserve">system    Cur:  0.4%    Avg:  1.3%    Min:  0.0%    Max:  6.4%</text>
<rect x="448.5" y="272.5" width="7" height="7" fill="#f040f0" stroke="#888" stroke-width="1"/>
<text x="461.5" y="279" font-family="Liberation Mono" font-size="11" letter-spacing="-0.46" fill="#cccccc" xml:space="preserve">I/O wait  Cur:  0.0%    Avg:  0.6%    Min:  0.0%    Max:  7.5%</text>
<rect x="448.5" y="284.5" width="7" height="7" fill="#909090" stroke="#888" stroke-width="1"/>
<text x="461.5" y="291" font-family="Liberation Mono" font-size="11" letter-spacing="-0.46" fill="#cccccc" xml:space="preserve">IRQ       Cur:  0.1%    Avg:  0.1%    Min:  0.1%    Max:  0.2%</text>
<rect x="448.5" y="296.5" width="7" height="7" fill="#e09040" stroke="#888" stroke-width="1"/>
<text x="461.5" y="303" font-family="Liberation Mono" font-size="11" letter-spacing="-0.46" fill="#cccccc" xml:space="preserve">softIRQ   Cur:  0.0%    Avg:  0.0%    Min:  0.0%    Max:  0.1%</text>
<rect x="448.5" y="308.5" width="7" height="7" fill="#40e040" stroke="#888" stroke-width="1"/>
<text x="461.5" y="315" font-family="Liberation Mono" font-size="11" letter-spacing="-0.46" fill="#cccccc" xml:space="preserve">steal     Cur:  0.0%    Avg:  0.0%    Min:  0.0%    Max:  0.0%</text>
<rect x="448.5" y="320.5" width="7" height="7" fill="#408840" stroke="#888" stroke-width="1"/>
<text x="461.5" y="327" font-family="Liberation Mono" font-size="11" letter-spacing="-0.46" fill="#cccccc" xml:space="preserve">guest     Cur:  0.0%    Avg:  0.0%    Min:  0.0%    Max:  0.0%</text>
<rect x="7" y="343" width="422" height="305" fill="#444444"/>
<rect x="7" y="343" width="422" height="1" fill="#3a3a3a"/>
<rect x="7" y="343" width="1" height="305" fill="#3a3a3a"/>
<rect x="7" y="647" width="422" height="1" fill="#cfcfcf"/>
<rect x="428" y="344" width="1" height="304" fill="#cfcfcf"/>
<rect x="10" y="346" width="416" height="299" fill="#111111"/>
<rect x="73" y="374" width="325" height="151" fill="#030303"/>
<svg x="73" y="373" width="325" height="152" viewBox="73 373 325 152" overflow="hidden">
<polygon points="73.2,525.0 73.2,519.9 75.6,519.4 78.3,521.7 82.0,520.3 86.2,516.1 88.5,520.8 92.2,518.5 95.0,518.0 97.8,518.5 101.5,517.5 105.2,517.1 107.1,510.6 108.5,502.2 109.9,509.7 112.2,512.4 113.6,517.1 116.3,515.2 119.1,518.9 122.4,505.0 124.2,517.1 126.1,506.4 127.9,516.1 131.2,511.5 134.0,512.4 136.3,512.4 137.7,518.9 140.4,510.1 143.2,518.9 146.0,517.1 147.1,519.2 152.6,518.2 157.5,520.6 161.7,518.9 165.9,520.6 174.2,520.2 178.4,520.6 183.9,520.2 189.5,521.3 195.0,520.2 200.6,520.9 201.0,521.5 202.2,438.4 204.2,506.8 205.9,516.6 207.6,506.8 209.5,428.6 211.5,514.1 214.4,501.9 216.1,394.4 217.6,467.7 219.3,418.9 221.0,499.5 224.2,505.6 227.9,504.4 231.5,506.8 236.4,503.2 240.1,505.6 243.8,511.7 246.7,514.1 247.9,482.4 251.1,489.7 254.7,492.2 259.6,479.9 263.3,499.5 267.0,499.5 270.1,442.1 271.8,499.5 276.7,506.8 281.6,506.8 284.1,484.8 287.7,501.9 292.6,497.0 295.5,487.3 297.5,383.4 299.5,472.6 302.4,482.4 306.1,478.7 309.7,489.7 314.6,472.6 318.3,479.9 322.7,451.8 325.6,520.0 329.3,521.0 330.2,522.8 331.6,493.2 333.0,521.9 335.8,501.0 337.6,503.4 338.5,503.4 340.4,518.2 342.2,497.8 344.1,511.7 345.5,510.8 347.8,518.2 349.7,514.5 353.4,515.4 356.1,510.8 358.0,511.7 360.3,503.8 362.6,520.0 365.4,514.5 368.2,520.0 371.9,513.6 374.7,507.1 377.5,502.4 379.3,513.6 381.2,507.1 383.9,513.6 386.3,509.9 388.1,520.0 391.4,507.1 394.1,521.0 396.5,509.9 397.4,523.8 397.4,525.0" fill="#f03cf0" fill-opacity="0.95"/>
<polygon points="201.0,525.0 201.0,524.0 202.0,522.0 325.0,522.0 326.0,524.0 326.0,525.0" fill="#e09040" fill-opacity="0.9"/>
<polyline points="73.2,519.9 75.6,519.4 78.3,521.7 82.0,520.3 86.2,516.1 88.5,520.8 92.2,518.5 95.0,518.0 97.8,518.5 101.5,517.5 105.2,517.1 107.1,510.6 108.5,502.2 109.9,509.7 112.2,512.4 113.6,517.1 116.3,515.2 119.1,518.9 122.4,505.0 124.2,517.1 126.1,506.4 127.9,516.1 131.2,511.5 134.0,512.4 136.3,512.4 137.7,518.9 140.4,510.1 143.2,518.9 146.0,517.1 147.1,519.2 152.6,518.2 157.5,520.6 161.7,518.9 165.9,520.6 174.2,520.2 178.4,520.6 183.9,520.2 189.5,521.3 195.0,520.2 200.6,520.9 201.0,521.5 202.2,438.4 204.2,506.8 205.9,516.6 207.6,506.8 209.5,428.6 211.5,514.1 214.4,501.9 216.1,394.4 217.6,467.7 219.3,418.9 221.0,499.5 224.2,505.6 227.9,504.4 231.5,506.8 236.4,503.2 240.1,505.6 243.8,511.7 246.7,514.1 247.9,482.4 251.1,489.7 254.7,492.2 259.6,479.9 263.3,499.5 267.0,499.5 270.1,442.1 271.8,499.5 276.7,506.8 281.6,506.8 284.1,484.8 287.7,501.9 292.6,497.0 295.5,487.3 297.5,383.4 299.5,472.6 302.4,482.4 306.1,478.7 309.7,489.7 314.6,472.6 318.3,479.9 322.7,451.8 325.6,520.0 329.3,521.0 330.2,522.8 331.6,493.2 333.0,521.9 335.8,501.0 337.6,503.4 338.5,503.4 340.4,518.2 342.2,497.8 344.1,511.7 345.5,510.8 347.8,518.2 349.7,514.5 353.4,515.4 356.1,510.8 358.0,511.7 360.3,503.8 362.6,520.0 365.4,514.5 368.2,520.0 371.9,513.6 374.7,507.1 377.5,502.4 379.3,513.6 381.2,507.1 383.9,513.6 386.3,509.9 388.1,520.0 391.4,507.1 394.1,521.0 396.5,509.9 397.4,523.8" fill="none" stroke="#ff00ff" stroke-width="1.2" stroke-linejoin="miter" stroke-miterlimit="10"/>
<polyline points="73.0,522.0 75.0,522.0 77.0,521.9 79.0,522.0 81.0,521.4 83.0,521.4 85.0,519.0 87.0,520.2 89.0,522.2 91.0,521.6 93.0,521.4 95.0,518.9 97.0,520.5 99.0,520.8 101.0,521.7 103.0,521.5 105.0,520.1 107.0,520.3 109.0,519.8 111.0,520.1 113.0,517.0 115.0,513.3 117.0,514.9 119.0,517.0 121.0,521.0 123.0,520.1 125.0,520.0 127.0,521.9 129.0,520.6 131.0,520.7 133.0,522.4 135.0,522.3 137.0,521.2 139.0,522.6 141.0,521.9 143.0,522.3 145.0,521.4 147.0,523.0 149.0,522.6 151.0,523.2 153.0,523.1 155.0,521.8 157.0,522.0 159.0,521.5 161.0,521.5 163.0,521.3 165.0,521.8 167.0,522.5 169.0,521.2 171.0,522.6 173.0,521.9 175.0,521.8 177.0,522.9 179.0,522.2 181.0,521.9 183.0,522.2 185.0,522.7 187.0,521.3 189.0,523.2 191.0,521.2 193.0,522.8 195.0,523.0 197.0,521.2 199.0,522.8 201.0,521.5 202.2,501.9 204.2,516.6 207.0,520.3 209.5,514.1 213.2,519.0 216.9,506.8 218.8,492.2 220.5,514.1 224.2,516.6 229.1,509.3 232.8,516.6 236.4,503.2 240.1,516.6 245.0,508.5 246.3,517.9 250.4,520.6 255.7,519.2 257.8,493.0 259.1,515.2 261.1,476.3 263.1,512.5 265.1,493.7 266.5,465.5 267.8,496.4 269.8,503.1 271.2,515.2 273.9,484.3 275.2,509.8 277.2,499.1 279.6,446.0 281.0,504.5 283.3,513.9 286.0,497.7 288.6,501.8 290.7,517.9 294.7,488.3 296.7,519.2 299.4,488.3 301.4,505.8 304.1,487.0 306.5,466.2 308.1,507.1 310.8,508.5 313.5,497.7 316.2,509.8 320.2,486.3 322.2,507.1 324.9,520.6 330.0,521.9 331.6,516.6 333.0,523.0 340.0,522.0 345.0,523.0 360.0,522.5 366.0,520.5 370.0,523.0 376.0,521.0 380.0,523.0 397.0,523.0" fill="none" stroke="#0000f0" stroke-width="1.5" stroke-linejoin="miter" stroke-miterlimit="10"/>
<polyline points="73.0,522.0 112.0,521.0 116.0,520.0 120.0,522.0 200.0,522.0 201.0,521.7 202.5,521.6 204.0,522.0 205.5,520.8 207.0,520.6 208.5,520.4 210.0,519.4 211.5,519.7 213.0,519.6 214.5,519.6 216.0,518.0 217.5,518.5 219.0,518.2 220.5,519.7 222.0,519.6 223.5,518.4 225.0,520.3 226.5,520.4 228.0,519.9 229.5,519.9 231.0,519.1 232.5,518.9 234.0,520.0 235.5,519.1 237.0,519.4 238.5,519.6 240.0,519.3 241.5,520.2 243.0,520.2 244.5,521.0 246.0,520.1 247.5,520.0 249.0,519.3 250.5,519.3 252.0,518.5 253.5,517.8 255.0,518.8 256.5,518.4 258.0,517.7 259.5,517.1 261.0,515.9 262.5,516.2 264.0,516.9 265.5,517.0 267.0,518.9 268.5,518.3 270.0,518.4 271.5,516.7 273.0,517.0 274.5,516.0 276.0,513.6 277.5,515.2 279.0,518.9 280.5,519.2 282.0,518.9 283.5,516.4 285.0,514.4 286.5,515.8 288.0,516.9 289.5,516.6 291.0,517.0 292.5,518.3 294.0,520.2 295.5,520.6 297.0,519.2 298.5,518.8 300.0,517.9 301.5,517.1 303.0,518.3 304.5,517.0 306.0,517.6 307.5,517.3 309.0,516.7 310.5,517.7 312.0,516.4 313.5,517.3 315.0,516.3 316.5,517.4 318.0,517.5 319.5,518.1 321.0,520.1 322.5,520.4 324.0,520.1 331.6,513.0 333.0,522.0 397.0,522.0" fill="none" stroke="#00ffff" stroke-width="1" stroke-linejoin="miter" stroke-miterlimit="10"/>
</svg>
<rect x="73" y="524" width="325" height="1" fill="#6e5f19"/>
<g shape-rendering="crispEdges">
<line x1="74" y1="517.5" x2="399" y2="517.5" stroke="rgba(128,126,50,0.5)" stroke-dasharray="1 1"/>
<rect x="70" y="517" width="2" height="1" fill="rgba(128,126,50,0.5)"/>
<line x1="74" y1="502.5" x2="399" y2="502.5" stroke="rgba(128,126,50,0.5)" stroke-dasharray="1 1"/>
<rect x="70" y="502" width="2" height="1" fill="rgba(128,126,50,0.5)"/>
<line x1="74" y1="487.5" x2="399" y2="487.5" stroke="rgba(128,126,50,0.5)" stroke-dasharray="1 1"/>
<rect x="70" y="487" width="2" height="1" fill="rgba(128,126,50,0.5)"/>
<line x1="74" y1="472.5" x2="399" y2="472.5" stroke="rgba(128,126,50,0.5)" stroke-dasharray="1 1"/>
<rect x="70" y="472" width="2" height="1" fill="rgba(128,126,50,0.5)"/>
<line x1="74" y1="457.5" x2="399" y2="457.5" stroke="rgba(128,126,50,0.5)" stroke-dasharray="1 1"/>
<rect x="70" y="457" width="2" height="1" fill="rgba(128,126,50,0.5)"/>
<line x1="74" y1="442.5" x2="399" y2="442.5" stroke="rgba(128,126,50,0.5)" stroke-dasharray="1 1"/>
<rect x="70" y="442" width="2" height="1" fill="rgba(128,126,50,0.5)"/>
<line x1="74" y1="427.5" x2="399" y2="427.5" stroke="rgba(128,126,50,0.5)" stroke-dasharray="1 1"/>
<rect x="70" y="427" width="2" height="1" fill="rgba(128,126,50,0.5)"/>
<line x1="74" y1="412.5" x2="399" y2="412.5" stroke="rgba(128,126,50,0.5)" stroke-dasharray="1 1"/>
<rect x="70" y="412" width="2" height="1" fill="rgba(128,126,50,0.5)"/>
<line x1="74" y1="397.5" x2="399" y2="397.5" stroke="rgba(128,126,50,0.5)" stroke-dasharray="1 1"/>
<rect x="70" y="397" width="2" height="1" fill="rgba(128,126,50,0.5)"/>
<line x1="74" y1="382.5" x2="399" y2="382.5" stroke="rgba(128,126,50,0.5)" stroke-dasharray="1 1"/>
<rect x="70" y="382" width="2" height="1" fill="rgba(128,126,50,0.5)"/>
<line x1="79.5" y1="374" x2="79.5" y2="524" stroke="rgba(128,126,50,0.5)" stroke-dasharray="1 1"/>
<rect x="79" y="372" width="1" height="2" fill="rgba(128,126,50,0.5)"/>
<rect x="79" y="525" width="1" height="2" fill="rgba(128,126,50,0.5)"/>
<line x1="93.5" y1="374" x2="93.5" y2="524" stroke="rgba(128,126,50,0.5)" stroke-dasharray="1 1"/>
<rect x="93" y="372" width="1" height="2" fill="rgba(128,126,50,0.5)"/>
<rect x="93" y="525" width="1" height="2" fill="rgba(128,126,50,0.5)"/>
<line x1="107.5" y1="374" x2="107.5" y2="524" stroke="rgba(128,126,50,0.5)" stroke-dasharray="1 1"/>
<rect x="107" y="372" width="1" height="2" fill="rgba(128,126,50,0.5)"/>
<rect x="107" y="525" width="1" height="2" fill="rgba(128,126,50,0.5)"/>
<line x1="120.5" y1="374" x2="120.5" y2="524" stroke="rgba(128,126,50,0.5)" stroke-dasharray="1 1"/>
<rect x="120" y="372" width="1" height="2" fill="rgba(128,126,50,0.5)"/>
<rect x="120" y="525" width="1" height="2" fill="rgba(128,126,50,0.5)"/>
<line x1="147.5" y1="374" x2="147.5" y2="524" stroke="rgba(128,126,50,0.5)" stroke-dasharray="1 1"/>
<rect x="147" y="372" width="1" height="2" fill="rgba(128,126,50,0.5)"/>
<rect x="147" y="525" width="1" height="2" fill="rgba(128,126,50,0.5)"/>
<line x1="161.5" y1="374" x2="161.5" y2="524" stroke="rgba(128,126,50,0.5)" stroke-dasharray="1 1"/>
<rect x="161" y="372" width="1" height="2" fill="rgba(128,126,50,0.5)"/>
<rect x="161" y="525" width="1" height="2" fill="rgba(128,126,50,0.5)"/>
<line x1="174.5" y1="374" x2="174.5" y2="524" stroke="rgba(128,126,50,0.5)" stroke-dasharray="1 1"/>
<rect x="174" y="372" width="1" height="2" fill="rgba(128,126,50,0.5)"/>
<rect x="174" y="525" width="1" height="2" fill="rgba(128,126,50,0.5)"/>
<line x1="188.5" y1="374" x2="188.5" y2="524" stroke="rgba(128,126,50,0.5)" stroke-dasharray="1 1"/>
<rect x="188" y="372" width="1" height="2" fill="rgba(128,126,50,0.5)"/>
<rect x="188" y="525" width="1" height="2" fill="rgba(128,126,50,0.5)"/>
<line x1="201.5" y1="374" x2="201.5" y2="524" stroke="rgba(128,126,50,0.5)" stroke-dasharray="1 1"/>
<rect x="201" y="372" width="1" height="2" fill="rgba(128,126,50,0.5)"/>
<rect x="201" y="525" width="1" height="2" fill="rgba(128,126,50,0.5)"/>
<line x1="228.5" y1="374" x2="228.5" y2="524" stroke="rgba(128,126,50,0.5)" stroke-dasharray="1 1"/>
<rect x="228" y="372" width="1" height="2" fill="rgba(128,126,50,0.5)"/>
<rect x="228" y="525" width="1" height="2" fill="rgba(128,126,50,0.5)"/>
<line x1="242.5" y1="374" x2="242.5" y2="524" stroke="rgba(128,126,50,0.5)" stroke-dasharray="1 1"/>
<rect x="242" y="372" width="1" height="2" fill="rgba(128,126,50,0.5)"/>
<rect x="242" y="525" width="1" height="2" fill="rgba(128,126,50,0.5)"/>
<line x1="255.5" y1="374" x2="255.5" y2="524" stroke="rgba(128,126,50,0.5)" stroke-dasharray="1 1"/>
<rect x="255" y="372" width="1" height="2" fill="rgba(128,126,50,0.5)"/>
<rect x="255" y="525" width="1" height="2" fill="rgba(128,126,50,0.5)"/>
<line x1="269.5" y1="374" x2="269.5" y2="524" stroke="rgba(128,126,50,0.5)" stroke-dasharray="1 1"/>
<rect x="269" y="372" width="1" height="2" fill="rgba(128,126,50,0.5)"/>
<rect x="269" y="525" width="1" height="2" fill="rgba(128,126,50,0.5)"/>
<line x1="282.5" y1="374" x2="282.5" y2="524" stroke="rgba(128,126,50,0.5)" stroke-dasharray="1 1"/>
<rect x="282" y="372" width="1" height="2" fill="rgba(128,126,50,0.5)"/>
<rect x="282" y="525" width="1" height="2" fill="rgba(128,126,50,0.5)"/>
<line x1="309.5" y1="374" x2="309.5" y2="524" stroke="rgba(128,126,50,0.5)" stroke-dasharray="1 1"/>
<rect x="309" y="372" width="1" height="2" fill="rgba(128,126,50,0.5)"/>
<rect x="309" y="525" width="1" height="2" fill="rgba(128,126,50,0.5)"/>
<line x1="323.5" y1="374" x2="323.5" y2="524" stroke="rgba(128,126,50,0.5)" stroke-dasharray="1 1"/>
<rect x="323" y="372" width="1" height="2" fill="rgba(128,126,50,0.5)"/>
<rect x="323" y="525" width="1" height="2" fill="rgba(128,126,50,0.5)"/>
<line x1="336.5" y1="374" x2="336.5" y2="524" stroke="rgba(128,126,50,0.5)" stroke-dasharray="1 1"/>
<rect x="336" y="372" width="1" height="2" fill="rgba(128,126,50,0.5)"/>
<rect x="336" y="525" width="1" height="2" fill="rgba(128,126,50,0.5)"/>
<line x1="350.5" y1="374" x2="350.5" y2="524" stroke="rgba(128,126,50,0.5)" stroke-dasharray="1 1"/>
<rect x="350" y="372" width="1" height="2" fill="rgba(128,126,50,0.5)"/>
<rect x="350" y="525" width="1" height="2" fill="rgba(128,126,50,0.5)"/>
<line x1="363.5" y1="374" x2="363.5" y2="524" stroke="rgba(128,126,50,0.5)" stroke-dasharray="1 1"/>
<rect x="363" y="372" width="1" height="2" fill="rgba(128,126,50,0.5)"/>
<rect x="363" y="525" width="1" height="2" fill="rgba(128,126,50,0.5)"/>
<line x1="390.5" y1="374" x2="390.5" y2="524" stroke="rgba(128,126,50,0.5)" stroke-dasharray="1 1"/>
<rect x="390" y="372" width="1" height="2" fill="rgba(128,126,50,0.5)"/>
<rect x="390" y="525" width="1" height="2" fill="rgba(128,126,50,0.5)"/>
<line x1="73" y1="509.5" x2="399" y2="509.5" stroke="rgba(160,240,172,0.56)" stroke-dasharray="1 1"/>
<rect x="70" y="509" width="2" height="1" fill="rgba(160,240,172,0.56)"/>
<line x1="73" y1="494.5" x2="399" y2="494.5" stroke="rgba(160,240,172,0.56)" stroke-dasharray="1 1"/>
<rect x="70" y="494" width="2" height="1" fill="rgba(160,240,172,0.56)"/>
<line x1="73" y1="479.5" x2="399" y2="479.5" stroke="rgba(160,240,172,0.56)" stroke-dasharray="1 1"/>
<rect x="70" y="479" width="2" height="1" fill="rgba(160,240,172,0.56)"/>
<line x1="73" y1="464.5" x2="399" y2="464.5" stroke="rgba(160,240,172,0.56)" stroke-dasharray="1 1"/>
<rect x="70" y="464" width="2" height="1" fill="rgba(160,240,172,0.56)"/>
<line x1="73" y1="449.5" x2="399" y2="449.5" stroke="rgba(160,240,172,0.56)" stroke-dasharray="1 1"/>
<rect x="70" y="449" width="2" height="1" fill="rgba(160,240,172,0.56)"/>
<line x1="73" y1="434.5" x2="399" y2="434.5" stroke="rgba(160,240,172,0.56)" stroke-dasharray="1 1"/>
<rect x="70" y="434" width="2" height="1" fill="rgba(160,240,172,0.56)"/>
<line x1="73" y1="419.5" x2="399" y2="419.5" stroke="rgba(160,240,172,0.56)" stroke-dasharray="1 1"/>
<rect x="70" y="419" width="2" height="1" fill="rgba(160,240,172,0.56)"/>
<line x1="73" y1="404.5" x2="399" y2="404.5" stroke="rgba(160,240,172,0.56)" stroke-dasharray="1 1"/>
<rect x="70" y="404" width="2" height="1" fill="rgba(160,240,172,0.56)"/>
<line x1="73" y1="389.5" x2="399" y2="389.5" stroke="rgba(160,240,172,0.56)" stroke-dasharray="1 1"/>
<rect x="70" y="389" width="2" height="1" fill="rgba(160,240,172,0.56)"/>
<line x1="73" y1="374.5" x2="399" y2="374.5" stroke="rgba(160,240,172,0.56)" stroke-dasharray="1 1"/>
<rect x="70" y="374" width="2" height="1" fill="rgba(160,240,172,0.56)"/>
<rect x="70" y="524" width="2" height="1" fill="rgba(160,240,172,0.56)"/>
<line x1="134.5" y1="374" x2="134.5" y2="524" stroke="rgba(160,240,172,0.56)" stroke-dasharray="1 1"/>
<rect x="134" y="372" width="1" height="2" fill="rgba(160,240,172,0.56)"/>
<rect x="134" y="525" width="1" height="2" fill="rgba(160,240,172,0.56)"/>
<line x1="215.5" y1="374" x2="215.5" y2="524" stroke="rgba(160,240,172,0.56)" stroke-dasharray="1 1"/>
<rect x="215" y="372" width="1" height="2" fill="rgba(160,240,172,0.56)"/>
<rect x="215" y="525" width="1" height="2" fill="rgba(160,240,172,0.56)"/>
<line x1="296.5" y1="374" x2="296.5" y2="524" stroke="rgba(160,240,172,0.56)" stroke-dasharray="1 1"/>
<rect x="296" y="372" width="1" height="2" fill="rgba(160,240,172,0.56)"/>
<rect x="296" y="525" width="1" height="2" fill="rgba(160,240,172,0.56)"/>
<line x1="377.5" y1="374" x2="377.5" y2="524" stroke="rgba(160,240,172,0.56)" stroke-dasharray="1 1"/>
<rect x="377" y="372" width="1" height="2" fill="rgba(160,240,172,0.56)"/>
<rect x="377" y="525" width="1" height="2" fill="rgba(160,240,172,0.56)"/>
</g>
<rect x="72" y="376" width="1" height="153" fill="#222"/>
<polygon points="70,372 76,372 73,367" fill="#fff"/>
<polygon points="400,521.5 400,527.5 405,524.5" fill="#fff"/>
<text x="66" y="528" text-anchor="end" font-family="Liberation Mono" font-size="11" letter-spacing="-0.46" fill="#cccccc">0</text>
<text x="66" y="513" text-anchor="end" font-family="Liberation Mono" font-size="11" letter-spacing="-0.46" fill="#cccccc">10</text>
<text x="66" y="498" text-anchor="end" font-family="Liberation Mono" font-size="11" letter-spacing="-0.46" fill="#cccccc">20</text>
<text x="66" y="483" text-anchor="end" font-family="Liberation Mono" font-size="11" letter-spacing="-0.46" fill="#cccccc">30</text>
<text x="66" y="468" text-anchor="end" font-family="Liberation Mono" font-size="11" letter-spacing="-0.46" fill="#cccccc">40</text>
<text x="66" y="453" text-anchor="end" font-family="Liberation Mono" font-size="11" letter-spacing="-0.46" fill="#cccccc">50</text>
<text x="66" y="438" text-anchor="end" font-family="Liberation Mono" font-size="11" letter-spacing="-0.46" fill="#cccccc">60</text>
<text x="66" y="423" text-anchor="end" font-family="Liberation Mono" font-size="11" letter-spacing="-0.46" fill="#cccccc">70</text>
<text x="66" y="408" text-anchor="end" font-family="Liberation Mono" font-size="11" letter-spacing="-0.46" fill="#cccccc">80</text>
<text x="66" y="393" text-anchor="end" font-family="Liberation Mono" font-size="11" letter-spacing="-0.46" fill="#cccccc">90</text>
<text x="66" y="378" text-anchor="end" font-family="Liberation Mono" font-size="11" letter-spacing="-0.46" fill="#cccccc">100</text>
<text x="135.2" y="537" text-anchor="middle" font-family="Liberation Mono" font-size="11" letter-spacing="-0.46" fill="#cccccc">18:00</text>
<text x="216.2" y="537" text-anchor="middle" font-family="Liberation Mono" font-size="11" letter-spacing="-0.46" fill="#cccccc">00:00</text>
<text x="297.2" y="537" text-anchor="middle" font-family="Liberation Mono" font-size="11" letter-spacing="-0.46" fill="#cccccc">06:00</text>
<text x="378.2" y="537" text-anchor="middle" font-family="Liberation Mono" font-size="11" letter-spacing="-0.46" fill="#cccccc">12:00</text>
<text x="218" y="361" text-anchor="middle" font-family="Liberation Mono" font-size="11.2" letter-spacing="0.28" fill="#cccccc" xml:space="preserve">Processor 2  (1day)</text>
<text transform="translate(21.7,449.3) rotate(-90)" text-anchor="middle" font-family="Liberation Mono" font-size="10.8" letter-spacing="-0.55" fill="#cccccc" xml:space="preserve">Percent (%)</text>
<text transform="translate(416,349) rotate(90)" font-family="Liberation Mono" font-size="9" letter-spacing="-0.4" fill="#4a4a4a">RRDTOOL / TOBI OETIKER</text>
<rect x="21.5" y="546.5" width="7" height="7" fill="#4444ff" stroke="#888" stroke-width="1"/>
<text x="34.5" y="553" font-family="Liberation Mono" font-size="11" letter-spacing="-0.46" fill="#cccccc" xml:space="preserve">user      Cur:  0.5%    Avg:  4.6%    Min:  0.0%    Max: 52.3%</text>
<rect x="21.5" y="558.5" width="7" height="7" fill="#f0f040" stroke="#888" stroke-width="1"/>
<text x="34.5" y="565" font-family="Liberation Mono" font-size="11" letter-spacing="-0.46" fill="#cccccc" xml:space="preserve">nice      Cur:  0.0%    Avg:  0.0%    Min:  0.0%    Max:  0.1%</text>
<rect x="21.5" y="570.5" width="7" height="7" fill="#40f0f0" stroke="#888" stroke-width="1"/>
<text x="34.5" y="577" font-family="Liberation Mono" font-size="11" letter-spacing="-0.46" fill="#cccccc" xml:space="preserve">system    Cur:  1.6%    Avg:  1.2%    Min:  0.0%    Max:  7.5%</text>
<rect x="21.5" y="582.5" width="7" height="7" fill="#f040f0" stroke="#888" stroke-width="1"/>
<text x="34.5" y="589" font-family="Liberation Mono" font-size="11" letter-spacing="-0.46" fill="#cccccc" xml:space="preserve">I/O wait  Cur:  9.6%    Avg: 11.1%    Min:  1.1%    Max: 93.9%</text>
<rect x="21.5" y="594.5" width="7" height="7" fill="#909090" stroke="#888" stroke-width="1"/>
<text x="34.5" y="601" font-family="Liberation Mono" font-size="11" letter-spacing="-0.46" fill="#cccccc" xml:space="preserve">IRQ       Cur:  0.0%    Avg:  0.0%    Min:  0.0%    Max:  0.0%</text>
<rect x="21.5" y="606.5" width="7" height="7" fill="#e09040" stroke="#888" stroke-width="1"/>
<text x="34.5" y="613" font-family="Liberation Mono" font-size="11" letter-spacing="-0.46" fill="#cccccc" xml:space="preserve">softIRQ   Cur:  0.2%    Avg:  0.4%    Min:  0.1%    Max:  2.8%</text>
<rect x="21.5" y="618.5" width="7" height="7" fill="#40e040" stroke="#888" stroke-width="1"/>
<text x="34.5" y="625" font-family="Liberation Mono" font-size="11" letter-spacing="-0.46" fill="#cccccc" xml:space="preserve">steal     Cur:  0.0%    Avg:  0.0%    Min:  0.0%    Max:  0.0%</text>
<rect x="21.5" y="630.5" width="7" height="7" fill="#408840" stroke="#888" stroke-width="1"/>
<text x="34.5" y="637" font-family="Liberation Mono" font-size="11" letter-spacing="-0.46" fill="#cccccc" xml:space="preserve">guest     Cur:  0.0%    Avg:  0.0%    Min:  0.0%    Max:  0.0%</text>
<rect x="434" y="343" width="422" height="305" fill="#444444"/>
<rect x="434" y="343" width="422" height="1" fill="#3a3a3a"/>
<rect x="434" y="343" width="1" height="305" fill="#3a3a3a"/>
<rect x="434" y="647" width="422" height="1" fill="#cfcfcf"/>
<rect x="855" y="344" width="1" height="304" fill="#cfcfcf"/>
<rect x="437" y="346" width="416" height="299" fill="#111111"/>
<rect x="500" y="374" width="325" height="151" fill="#030303"/>
<svg x="500" y="373" width="325" height="152" viewBox="500 373 325 152" overflow="hidden">
<polygon points="500.0,525.0 500.0,519.0 500.0,519.6 501.5,519.6 503.0,519.4 504.5,519.9 504.9,520.0 506.0,519.9 507.5,518.9 509.0,518.7 510.5,520.0 510.8,519.6 512.0,519.1 513.5,519.2 515.0,520.5 516.5,519.7 516.7,520.0 518.0,520.3 519.5,519.6 521.0,519.7 522.5,518.8 522.6,519.6 524.0,519.6 525.5,520.0 527.0,519.4 527.5,519.6 528.5,517.5 529.0,516.1 530.0,518.8 530.5,520.0 531.5,517.0 532.4,516.1 533.0,518.1 533.9,520.5 534.5,520.0 536.0,518.4 536.4,518.6 537.5,516.4 539.0,515.9 539.8,514.6 540.5,515.1 542.0,517.2 543.5,519.1 544.3,519.6 545.0,519.7 546.5,520.1 547.2,519.6 548.0,516.9 549.5,513.1 549.7,512.2 551.0,516.1 551.7,518.6 552.5,517.9 554.0,515.4 554.6,514.1 555.5,514.2 557.0,515.7 557.1,516.6 558.5,517.4 560.0,520.1 560.0,519.6 561.5,519.6 563.0,520.3 564.0,520.5 564.5,519.7 566.0,519.3 567.5,518.4 567.9,518.6 569.0,518.2 570.5,518.5 572.0,518.5 572.8,518.6 573.5,519.2 575.0,519.1 576.5,519.8 578.0,520.0 579.5,520.5 580.0,520.0 581.0,520.1 582.5,519.2 584.0,520.3 585.5,520.5 587.0,520.4 588.5,519.8 590.0,520.0 591.5,519.2 593.0,520.2 594.5,519.8 596.0,519.3 597.5,518.9 599.0,520.2 600.0,519.8 600.5,520.4 602.0,519.0 603.5,520.1 605.0,519.5 606.5,519.1 608.0,519.3 609.5,520.1 611.0,520.3 612.5,519.0 614.0,519.9 615.5,519.0 617.0,520.1 618.5,519.5 620.0,520.4 621.5,520.5 623.0,519.8 624.5,520.6 626.0,519.5 627.0,520.0 627.5,524.0 655.5,524.0 656.0,519.5 656.0,519.0 657.5,518.5 659.0,518.2 660.0,518.3 660.5,518.8 662.0,519.0 663.5,520.1 664.0,521.0 665.0,521.6 666.5,521.0 668.0,521.2 669.5,520.5 670.0,521.5 671.0,521.0 672.5,521.0 674.0,519.8 675.5,520.5 677.0,520.2 678.0,520.0 678.5,519.2 680.0,520.3 681.5,520.2 683.0,520.8 684.5,520.5 685.0,521.0 686.0,521.1 687.5,521.2 689.0,520.0 690.5,520.1 692.0,521.1 693.5,521.5 695.0,520.4 696.5,520.7 698.0,520.9 699.5,520.5 700.0,521.0 701.0,520.6 702.5,520.6 704.0,520.8 705.5,521.2 707.0,520.8 708.5,521.0 710.0,521.7 711.5,520.6 713.0,521.6 714.5,521.9 716.0,521.3 717.5,521.2 719.0,522.2 720.0,522.0 720.5,521.3 722.0,520.8 723.5,520.9 725.0,521.0 726.5,519.7 728.0,519.7 729.5,519.3 731.0,519.8 732.5,518.8 733.0,519.0 734.0,519.2 735.5,518.0 737.0,518.0 737.0,518.5 738.5,519.0 740.0,519.8 741.5,519.6 742.0,520.0 743.0,519.3 744.5,519.0 746.0,519.5 747.5,518.9 749.0,519.8 750.5,519.7 752.0,518.5 753.5,518.6 755.0,519.3 755.0,519.0 756.5,514.4 758.0,510.1 758.6,508.0 759.5,511.3 761.0,517.2 761.0,518.0 762.5,515.3 764.0,513.9 765.0,512.2 765.5,512.6 767.0,515.6 768.0,518.0 768.5,514.1 769.7,506.0 770.0,507.0 771.5,513.5 772.0,516.0 773.0,513.0 773.4,511.2 774.5,512.5 776.0,515.0 776.0,516.0 777.5,515.0 778.6,513.3 779.0,514.1 780.5,515.9 782.0,516.7 782.0,517.0 783.5,516.9 784.8,515.9 785.0,516.5 786.5,516.1 788.0,517.7 789.5,518.6 790.0,518.5 791.0,518.6 792.5,518.5 794.0,518.2 795.5,518.3 797.0,518.2 798.5,518.0 800.0,518.9 800.0,519.0 801.5,517.7 802.0,518.0 803.0,512.4 804.4,503.9 804.5,503.6 806.0,515.1 806.5,518.0 807.5,518.4 809.0,519.2 810.0,519.0 810.5,518.5 812.0,515.9 813.5,512.7 813.5,512.8 815.0,516.5 815.5,519.0 816.5,516.3 818.0,511.1 818.4,510.7 819.5,514.5 820.5,519.0 821.0,519.1 822.5,519.1 824.0,519.2 824.0,519.5 824.0,525.0" fill="#38dede" fill-opacity="0.95"/>
<polygon points="636.0,525.0 636.0,523.0 639.0,514.6 645.0,515.0 647.0,523.0 647.0,525.0" fill="#f03cf0" fill-opacity="0.95"/>
<polygon points="636.0,525.0 636.0,523.0 637.0,516.0 639.0,513.5 641.0,513.2 644.0,515.0 646.0,519.0 647.0,523.0 647.0,525.0" fill="#4641e6" fill-opacity="0.9"/>
<polygon points="683.0,525.0 683.0,523.0 686.0,518.3 690.0,523.0 690.0,525.0" fill="#f03cf0" fill-opacity="0.95"/>
<polygon points="722.0,525.0 722.0,523.0 726.0,512.4 730.0,523.0 730.0,525.0" fill="#f03cf0" fill-opacity="0.95"/>
<polygon points="746.0,525.0 746.0,523.0 747.5,503.9 749.0,523.0 749.0,525.0" fill="#f03cf0" fill-opacity="0.95"/>
<polygon points="766.0,525.0 766.0,523.0 768.4,489.8 770.5,523.0 770.5,525.0" fill="#f03cf0" fill-opacity="0.95"/>
<rect x="500" y="523" width="325" height="1" fill="rgba(200,120,40,0.35)"/>
<polyline points="500.0,519.0 500.0,519.6 501.5,519.6 503.0,519.4 504.5,519.9 504.9,520.0 506.0,519.9 507.5,518.9 509.0,518.7 510.5,520.0 510.8,519.6 512.0,519.1 513.5,519.2 515.0,520.5 516.5,519.7 516.7,520.0 518.0,520.3 519.5,519.6 521.0,519.7 522.5,518.8 522.6,519.6 524.0,519.6 525.5,520.0 527.0,519.4 527.5,519.6 528.5,517.5 529.0,516.1 530.0,518.8 530.5,520.0 531.5,517.0 532.4,516.1 533.0,518.1 533.9,520.5 534.5,520.0 536.0,518.4 536.4,518.6 537.5,516.4 539.0,515.9 539.8,514.6 540.5,515.1 542.0,517.2 543.5,519.1 544.3,519.6 545.0,519.7 546.5,520.1 547.2,519.6 548.0,516.9 549.5,513.1 549.7,512.2 551.0,516.1 551.7,518.6 552.5,517.9 554.0,515.4 554.6,514.1 555.5,514.2 557.0,515.7 557.1,516.6 558.5,517.4 560.0,520.1 560.0,519.6 561.5,519.6 563.0,520.3 564.0,520.5 564.5,519.7 566.0,519.3 567.5,518.4 567.9,518.6 569.0,518.2 570.5,518.5 572.0,518.5 572.8,518.6 573.5,519.2 575.0,519.1 576.5,519.8 578.0,520.0 579.5,520.5 580.0,520.0 581.0,520.1 582.5,519.2 584.0,520.3 585.5,520.5 587.0,520.4 588.5,519.8 590.0,520.0 591.5,519.2 593.0,520.2 594.5,519.8 596.0,519.3 597.5,518.9 599.0,520.2 600.0,519.8 600.5,520.4 602.0,519.0 603.5,520.1 605.0,519.5 606.5,519.1 608.0,519.3 609.5,520.1 611.0,520.3 612.5,519.0 614.0,519.9 615.5,519.0 617.0,520.1 618.5,519.5 620.0,520.4 621.5,520.5 623.0,519.8 624.5,520.6 626.0,519.5 627.0,520.0 627.5,524.0 655.5,524.0 656.0,519.5 656.0,519.0 657.5,518.5 659.0,518.2 660.0,518.3 660.5,518.8 662.0,519.0 663.5,520.1 664.0,521.0 665.0,521.6 666.5,521.0 668.0,521.2 669.5,520.5 670.0,521.5 671.0,521.0 672.5,521.0 674.0,519.8 675.5,520.5 677.0,520.2 678.0,520.0 678.5,519.2 680.0,520.3 681.5,520.2 683.0,520.8 684.5,520.5 685.0,521.0 686.0,521.1 687.5,521.2 689.0,520.0 690.5,520.1 692.0,521.1 693.5,521.5 695.0,520.4 696.5,520.7 698.0,520.9 699.5,520.5 700.0,521.0 701.0,520.6 702.5,520.6 704.0,520.8 705.5,521.2 707.0,520.8 708.5,521.0 710.0,521.7 711.5,520.6 713.0,521.6 714.5,521.9 716.0,521.3 717.5,521.2 719.0,522.2 720.0,522.0 720.5,521.3 722.0,520.8 723.5,520.9 725.0,521.0 726.5,519.7 728.0,519.7 729.5,519.3 731.0,519.8 732.5,518.8 733.0,519.0 734.0,519.2 735.5,518.0 737.0,518.0 737.0,518.5 738.5,519.0 740.0,519.8 741.5,519.6 742.0,520.0 743.0,519.3 744.5,519.0 746.0,519.5 747.5,518.9 749.0,519.8 750.5,519.7 752.0,518.5 753.5,518.6 755.0,519.3 755.0,519.0 756.5,514.4 758.0,510.1 758.6,508.0 759.5,511.3 761.0,517.2 761.0,518.0 762.5,515.3 764.0,513.9 765.0,512.2 765.5,512.6 767.0,515.6 768.0,518.0 768.5,514.1 769.7,506.0 770.0,507.0 771.5,513.5 772.0,516.0 773.0,513.0 773.4,511.2 774.5,512.5 776.0,515.0 776.0,516.0 777.5,515.0 778.6,513.3 779.0,514.1 780.5,515.9 782.0,516.7 782.0,517.0 783.5,516.9 784.8,515.9 785.0,516.5 786.5,516.1 788.0,517.7 789.5,518.6 790.0,518.5 791.0,518.6 792.5,518.5 794.0,518.2 795.5,518.3 797.0,518.2 798.5,518.0 800.0,518.9 800.0,519.0 801.5,517.7 802.0,518.0 803.0,512.4 804.4,503.9 804.5,503.6 806.0,515.1 806.5,518.0 807.5,518.4 809.0,519.2 810.0,519.0 810.5,518.5 812.0,515.9 813.5,512.7 813.5,512.8 815.0,516.5 815.5,519.0 816.5,516.3 818.0,511.1 818.4,510.7 819.5,514.5 820.5,519.0 821.0,519.1 822.5,519.1 824.0,519.2 824.0,519.5" fill="none" stroke="#00ffff" stroke-width="1" stroke-linejoin="miter" stroke-miterlimit="10"/>
<polyline points="753.0,523.0 756.0,507.0 760.0,508.0 762.0,523.0" fill="none" stroke="#ff9020" stroke-width="1" stroke-linejoin="miter" stroke-miterlimit="10"/>
<polyline points="500.0,522.3 500.0,522.5 502.0,522.2 504.0,522.0 506.0,522.8 508.0,521.8 510.0,522.4 512.0,522.8 514.0,521.9 516.0,522.4 518.0,522.5 520.0,521.8 522.0,522.2 524.0,522.6 526.0,522.3 528.0,522.6 530.0,522.0 532.0,522.1 534.0,521.9 536.0,522.4 538.0,522.8 540.0,522.5 542.0,522.7 544.0,522.2 546.0,522.6 548.0,521.9 550.0,522.1 552.0,522.6 554.0,522.6 556.0,522.3 558.0,521.9 560.0,522.1 562.0,522.0 564.0,522.1 566.0,522.7 568.0,522.0 570.0,522.8 572.0,522.8 574.0,521.9 576.0,522.2 578.0,522.4 580.0,521.8 582.0,522.3 584.0,522.8 586.0,521.9 588.0,522.5 590.0,521.9 592.0,522.4 594.0,522.8 596.0,522.0 598.0,521.8 600.0,521.9 602.0,522.4 604.0,521.8 606.0,521.9 608.0,522.4 610.0,522.8 612.0,522.3 614.0,522.2 616.0,522.5 618.0,521.9 620.0,522.4 622.0,522.0 624.0,522.5 626.0,522.9 628.0,521.9 630.0,522.4 632.0,522.5 634.0,522.0 636.0,522.1 636.0,522.5 638.0,517.6 639.0,514.6 640.0,515.1 642.0,514.2 644.0,515.0 645.0,515.0 646.0,519.1 647.0,522.5 648.0,522.1 650.0,522.5 652.0,521.8 654.0,522.2 656.0,522.6 658.0,522.5 660.0,522.7 662.0,521.9 664.0,522.2 666.0,522.8 668.0,522.5 670.0,522.3 672.0,522.3 674.0,522.9 676.0,522.4 678.0,521.8 680.0,522.7 682.0,522.2 683.0,522.5 684.0,520.9 686.0,517.8 686.0,518.3 688.0,520.2 690.0,522.2 690.0,522.5 692.0,521.9 694.0,522.5 696.0,521.9 698.0,522.7 700.0,521.8 702.0,522.7 704.0,522.7 706.0,522.4 708.0,522.6 710.0,522.1 712.0,522.6 714.0,522.3 716.0,522.1 718.0,522.9 720.0,522.2 722.0,522.2 722.0,522.5 724.0,517.7 726.0,512.1 726.0,512.4 728.0,517.5 730.0,522.0 730.0,522.5 732.0,522.7 734.0,522.1 736.0,521.9 738.0,522.9 740.0,522.0 742.0,522.9 744.0,522.9 746.0,522.5 746.0,522.5 747.5,503.9 748.0,509.4 749.0,522.5 750.0,521.9 752.0,522.0 754.0,522.2 756.0,522.5 758.0,522.9 760.0,522.2 762.0,522.0 764.0,522.4 766.0,522.0 766.0,522.5 768.0,494.6 768.4,489.8 770.0,514.6 770.5,522.5 772.0,522.6 774.0,521.9 776.0,522.3 778.0,522.6 780.0,522.7 782.0,522.2 784.0,522.8 786.0,522.0 788.0,522.6 790.0,522.7 792.0,522.8 794.0,522.4 796.0,521.9 798.0,521.9 800.0,522.4 802.0,522.0 804.0,522.5 806.0,521.9 808.0,522.7 810.0,522.0 812.0,521.8 814.0,522.0 816.0,522.3 818.0,522.4 820.0,522.2 822.0,522.0 824.0,522.3 824.0,522.5" fill="none" stroke="#ff00ff" stroke-width="1" stroke-linejoin="miter" stroke-miterlimit="10"/>
<polyline points="500.0,522.4 500.0,523.0 502.0,522.1 504.0,522.5 506.0,522.0 508.0,521.8 510.0,522.2 510.0,522.5 512.0,523.0 514.0,523.0 516.0,523.0 518.0,522.3 520.0,522.9 520.0,523.0 522.0,520.5 524.0,518.3 524.0,519.0 526.0,520.9 527.0,523.0 528.0,522.1 530.0,522.4 532.0,521.6 533.0,521.0 534.0,520.3 536.0,518.3 536.0,518.0 538.0,515.6 540.0,514.0 540.0,514.5 542.0,515.0 542.0,515.0 544.0,518.7 546.0,522.3 546.0,522.0 548.0,519.9 550.0,516.2 550.0,517.0 552.0,522.0 552.0,522.0 554.0,520.6 556.0,518.8 556.0,519.0 558.0,519.4 560.0,520.8 560.0,521.0 562.0,520.6 564.0,522.2 566.0,522.5 568.0,522.5 570.0,522.5 570.0,523.0 572.0,523.4 574.0,522.9 576.0,523.3 578.0,523.2 580.0,522.7 582.0,522.5 584.0,522.7 586.0,522.5 588.0,522.0 590.0,522.2 592.0,522.9 594.0,521.8 596.0,521.7 598.0,522.5 600.0,522.0 600.0,522.5 602.0,522.4 604.0,522.4 606.0,522.2 608.0,523.2 610.0,522.1 612.0,522.4 614.0,522.2 616.0,522.8 618.0,522.3 620.0,522.5 622.0,523.1 624.0,522.5 626.0,522.9 627.0,523.0 628.0,520.2 629.0,516.6 630.0,519.0 631.0,523.0 632.0,520.4 634.0,517.0 636.0,514.2 636.0,514.0 638.0,513.7 640.0,512.8 641.0,513.2 642.0,513.1 644.0,513.6 646.0,514.8 646.0,515.0 648.0,522.2 648.0,523.0 650.0,523.1 652.0,523.4 654.0,523.5 655.0,523.0 656.0,522.5 658.0,521.6 660.0,518.9 662.0,518.0 664.0,517.7 666.0,516.1 668.0,514.3 669.0,514.0 670.0,513.7 671.0,512.4 672.0,512.9 674.0,514.3 674.0,514.0 676.0,522.5 676.0,523.0 678.0,522.2 680.0,522.5 682.0,521.9 684.0,522.1 686.0,522.8 688.0,521.7 690.0,521.1 690.0,522.0 692.0,519.2 694.0,517.4 696.0,516.4 698.0,513.8 698.4,513.8 700.0,518.4 701.0,522.0 702.0,521.3 704.0,522.6 706.0,521.8 708.0,521.6 710.0,521.4 712.0,521.5 714.0,521.7 716.0,522.5 718.0,521.8 720.0,521.7 720.0,522.5 722.0,520.8 724.0,519.0 726.0,518.7 728.0,515.9 730.0,515.1 732.0,513.9 733.0,513.0 734.0,511.1 735.0,509.9 736.0,511.5 737.0,512.0 738.0,514.8 740.0,520.4 740.0,521.0 742.0,509.4 743.0,504.0 744.0,502.7 744.2,503.5 746.0,509.7 746.0,510.0 748.0,519.5 748.0,520.0 750.0,511.3 750.4,509.1 752.0,521.3 752.0,521.0 754.0,518.8 756.0,516.1 758.0,514.5 758.0,515.0 760.0,520.4 760.0,521.0 762.0,518.9 764.0,517.4 766.0,516.9 768.0,514.3 768.0,515.0 770.0,519.2 770.0,520.0 772.0,520.6 774.0,520.3 776.0,521.1 778.0,520.5 780.0,521.4 780.0,521.0 782.0,521.3 784.0,521.8 786.0,522.1 788.0,522.0 790.0,521.7 790.0,522.5 792.0,521.8 794.0,522.7 796.0,522.6 798.0,522.5 800.0,521.6 800.0,522.0 802.0,518.4 804.0,515.0 804.4,514.0 806.0,522.0 806.0,522.0 808.0,522.4 810.0,522.1 812.0,522.4 814.0,522.5 816.0,522.0 818.0,523.1 820.0,523.3 822.0,522.1 824.0,523.5 824.0,523.0" fill="none" stroke="#0000f0" stroke-width="1.2" stroke-linejoin="miter" stroke-miterlimit="10"/>
</svg>
<rect x="500" y="524" width="325" height="1" fill="#6e5f19"/>
<g shape-rendering="crispEdges">
<line x1="501" y1="517.5" x2="826" y2="517.5" stroke="rgba(128,126,50,0.5)" stroke-dasharray="1 1"/>
<rect x="497" y="517" width="2" height="1" fill="rgba(128,126,50,0.5)"/>
<line x1="501" y1="502.5" x2="826" y2="502.5" stroke="rgba(128,126,50,0.5)" stroke-dasharray="1 1"/>
<rect x="497" y="502" width="2" height="1" fill="rgba(128,126,50,0.5)"/>
<line x1="501" y1="487.5" x2="826" y2="487.5" stroke="rgba(128,126,50,0.5)" stroke-dasharray="1 1"/>
<rect x="497" y="487" width="2" height="1" fill="rgba(128,126,50,0.5)"/>
<line x1="501" y1="472.5" x2="826" y2="472.5" stroke="rgba(128,126,50,0.5)" stroke-dasharray="1 1"/>
<rect x="497" y="472" width="2" height="1" fill="rgba(128,126,50,0.5)"/>
<line x1="501" y1="457.5" x2="826" y2="457.5" stroke="rgba(128,126,50,0.5)" stroke-dasharray="1 1"/>
<rect x="497" y="457" width="2" height="1" fill="rgba(128,126,50,0.5)"/>
<line x1="501" y1="442.5" x2="826" y2="442.5" stroke="rgba(128,126,50,0.5)" stroke-dasharray="1 1"/>
<rect x="497" y="442" width="2" height="1" fill="rgba(128,126,50,0.5)"/>
<line x1="501" y1="427.5" x2="826" y2="427.5" stroke="rgba(128,126,50,0.5)" stroke-dasharray="1 1"/>
<rect x="497" y="427" width="2" height="1" fill="rgba(128,126,50,0.5)"/>
<line x1="501" y1="412.5" x2="826" y2="412.5" stroke="rgba(128,126,50,0.5)" stroke-dasharray="1 1"/>
<rect x="497" y="412" width="2" height="1" fill="rgba(128,126,50,0.5)"/>
<line x1="501" y1="397.5" x2="826" y2="397.5" stroke="rgba(128,126,50,0.5)" stroke-dasharray="1 1"/>
<rect x="497" y="397" width="2" height="1" fill="rgba(128,126,50,0.5)"/>
<line x1="501" y1="382.5" x2="826" y2="382.5" stroke="rgba(128,126,50,0.5)" stroke-dasharray="1 1"/>
<rect x="497" y="382" width="2" height="1" fill="rgba(128,126,50,0.5)"/>
<line x1="506.5" y1="374" x2="506.5" y2="524" stroke="rgba(128,126,50,0.5)" stroke-dasharray="1 1"/>
<rect x="506" y="372" width="1" height="2" fill="rgba(128,126,50,0.5)"/>
<rect x="506" y="525" width="1" height="2" fill="rgba(128,126,50,0.5)"/>
<line x1="520.5" y1="374" x2="520.5" y2="524" stroke="rgba(128,126,50,0.5)" stroke-dasharray="1 1"/>
<rect x="520" y="372" width="1" height="2" fill="rgba(128,126,50,0.5)"/>
<rect x="520" y="525" width="1" height="2" fill="rgba(128,126,50,0.5)"/>
<line x1="534.5" y1="374" x2="534.5" y2="524" stroke="rgba(128,126,50,0.5)" stroke-dasharray="1 1"/>
<rect x="534" y="372" width="1" height="2" fill="rgba(128,126,50,0.5)"/>
<rect x="534" y="525" width="1" height="2" fill="rgba(128,126,50,0.5)"/>
<line x1="547.5" y1="374" x2="547.5" y2="524" stroke="rgba(128,126,50,0.5)" stroke-dasharray="1 1"/>
<rect x="547" y="372" width="1" height="2" fill="rgba(128,126,50,0.5)"/>
<rect x="547" y="525" width="1" height="2" fill="rgba(128,126,50,0.5)"/>
<line x1="574.5" y1="374" x2="574.5" y2="524" stroke="rgba(128,126,50,0.5)" stroke-dasharray="1 1"/>
<rect x="574" y="372" width="1" height="2" fill="rgba(128,126,50,0.5)"/>
<rect x="574" y="525" width="1" height="2" fill="rgba(128,126,50,0.5)"/>
<line x1="588.5" y1="374" x2="588.5" y2="524" stroke="rgba(128,126,50,0.5)" stroke-dasharray="1 1"/>
<rect x="588" y="372" width="1" height="2" fill="rgba(128,126,50,0.5)"/>
<rect x="588" y="525" width="1" height="2" fill="rgba(128,126,50,0.5)"/>
<line x1="601.5" y1="374" x2="601.5" y2="524" stroke="rgba(128,126,50,0.5)" stroke-dasharray="1 1"/>
<rect x="601" y="372" width="1" height="2" fill="rgba(128,126,50,0.5)"/>
<rect x="601" y="525" width="1" height="2" fill="rgba(128,126,50,0.5)"/>
<line x1="615.5" y1="374" x2="615.5" y2="524" stroke="rgba(128,126,50,0.5)" stroke-dasharray="1 1"/>
<rect x="615" y="372" width="1" height="2" fill="rgba(128,126,50,0.5)"/>
<rect x="615" y="525" width="1" height="2" fill="rgba(128,126,50,0.5)"/>
<line x1="628.5" y1="374" x2="628.5" y2="524" stroke="rgba(128,126,50,0.5)" stroke-dasharray="1 1"/>
<rect x="628" y="372" width="1" height="2" fill="rgba(128,126,50,0.5)"/>
<rect x="628" y="525" width="1" height="2" fill="rgba(128,126,50,0.5)"/>
<line x1="655.5" y1="374" x2="655.5" y2="524" stroke="rgba(128,126,50,0.5)" stroke-dasharray="1 1"/>
<rect x="655" y="372" width="1" height="2" fill="rgba(128,126,50,0.5)"/>
<rect x="655" y="525" width="1" height="2" fill="rgba(128,126,50,0.5)"/>
<line x1="669.5" y1="374" x2="669.5" y2="524" stroke="rgba(128,126,50,0.5)" stroke-dasharray="1 1"/>
<rect x="669" y="372" width="1" height="2" fill="rgba(128,126,50,0.5)"/>
<rect x="669" y="525" width="1" height="2" fill="rgba(128,126,50,0.5)"/>
<line x1="682.5" y1="374" x2="682.5" y2="524" stroke="rgba(128,126,50,0.5)" stroke-dasharray="1 1"/>
<rect x="682" y="372" width="1" height="2" fill="rgba(128,126,50,0.5)"/>
<rect x="682" y="525" width="1" height="2" fill="rgba(128,126,50,0.5)"/>
<line x1="696.5" y1="374" x2="696.5" y2="524" stroke="rgba(128,126,50,0.5)" stroke-dasharray="1 1"/>
<rect x="696" y="372" width="1" height="2" fill="rgba(128,126,50,0.5)"/>
<rect x="696" y="525" width="1" height="2" fill="rgba(128,126,50,0.5)"/>
<line x1="709.5" y1="374" x2="709.5" y2="524" stroke="rgba(128,126,50,0.5)" stroke-dasharray="1 1"/>
<rect x="709" y="372" width="1" height="2" fill="rgba(128,126,50,0.5)"/>
<rect x="709" y="525" width="1" height="2" fill="rgba(128,126,50,0.5)"/>
<line x1="736.5" y1="374" x2="736.5" y2="524" stroke="rgba(128,126,50,0.5)" stroke-dasharray="1 1"/>
<rect x="736" y="372" width="1" height="2" fill="rgba(128,126,50,0.5)"/>
<rect x="736" y="525" width="1" height="2" fill="rgba(128,126,50,0.5)"/>
<line x1="750.5" y1="374" x2="750.5" y2="524" stroke="rgba(128,126,50,0.5)" stroke-dasharray="1 1"/>
<rect x="750" y="372" width="1" height="2" fill="rgba(128,126,50,0.5)"/>
<rect x="750" y="525" width="1" height="2" fill="rgba(128,126,50,0.5)"/>
<line x1="763.5" y1="374" x2="763.5" y2="524" stroke="rgba(128,126,50,0.5)" stroke-dasharray="1 1"/>
<rect x="763" y="372" width="1" height="2" fill="rgba(128,126,50,0.5)"/>
<rect x="763" y="525" width="1" height="2" fill="rgba(128,126,50,0.5)"/>
<line x1="777.5" y1="374" x2="777.5" y2="524" stroke="rgba(128,126,50,0.5)" stroke-dasharray="1 1"/>
<rect x="777" y="372" width="1" height="2" fill="rgba(128,126,50,0.5)"/>
<rect x="777" y="525" width="1" height="2" fill="rgba(128,126,50,0.5)"/>
<line x1="790.5" y1="374" x2="790.5" y2="524" stroke="rgba(128,126,50,0.5)" stroke-dasharray="1 1"/>
<rect x="790" y="372" width="1" height="2" fill="rgba(128,126,50,0.5)"/>
<rect x="790" y="525" width="1" height="2" fill="rgba(128,126,50,0.5)"/>
<line x1="817.5" y1="374" x2="817.5" y2="524" stroke="rgba(128,126,50,0.5)" stroke-dasharray="1 1"/>
<rect x="817" y="372" width="1" height="2" fill="rgba(128,126,50,0.5)"/>
<rect x="817" y="525" width="1" height="2" fill="rgba(128,126,50,0.5)"/>
<line x1="500" y1="509.5" x2="826" y2="509.5" stroke="rgba(160,240,172,0.56)" stroke-dasharray="1 1"/>
<rect x="497" y="509" width="2" height="1" fill="rgba(160,240,172,0.56)"/>
<line x1="500" y1="494.5" x2="826" y2="494.5" stroke="rgba(160,240,172,0.56)" stroke-dasharray="1 1"/>
<rect x="497" y="494" width="2" height="1" fill="rgba(160,240,172,0.56)"/>
<line x1="500" y1="479.5" x2="826" y2="479.5" stroke="rgba(160,240,172,0.56)" stroke-dasharray="1 1"/>
<rect x="497" y="479" width="2" height="1" fill="rgba(160,240,172,0.56)"/>
<line x1="500" y1="464.5" x2="826" y2="464.5" stroke="rgba(160,240,172,0.56)" stroke-dasharray="1 1"/>
<rect x="497" y="464" width="2" height="1" fill="rgba(160,240,172,0.56)"/>
<line x1="500" y1="449.5" x2="826" y2="449.5" stroke="rgba(160,240,172,0.56)" stroke-dasharray="1 1"/>
<rect x="497" y="449" width="2" height="1" fill="rgba(160,240,172,0.56)"/>
<line x1="500" y1="434.5" x2="826" y2="434.5" stroke="rgba(160,240,172,0.56)" stroke-dasharray="1 1"/>
<rect x="497" y="434" width="2" height="1" fill="rgba(160,240,172,0.56)"/>
<line x1="500" y1="419.5" x2="826" y2="419.5" stroke="rgba(160,240,172,0.56)" stroke-dasharray="1 1"/>
<rect x="497" y="419" width="2" height="1" fill="rgba(160,240,172,0.56)"/>
<line x1="500" y1="404.5" x2="826" y2="404.5" stroke="rgba(160,240,172,0.56)" stroke-dasharray="1 1"/>
<rect x="497" y="404" width="2" height="1" fill="rgba(160,240,172,0.56)"/>
<line x1="500" y1="389.5" x2="826" y2="389.5" stroke="rgba(160,240,172,0.56)" stroke-dasharray="1 1"/>
<rect x="497" y="389" width="2" height="1" fill="rgba(160,240,172,0.56)"/>
<line x1="500" y1="374.5" x2="826" y2="374.5" stroke="rgba(160,240,172,0.56)" stroke-dasharray="1 1"/>
<rect x="497" y="374" width="2" height="1" fill="rgba(160,240,172,0.56)"/>
<rect x="497" y="524" width="2" height="1" fill="rgba(160,240,172,0.56)"/>
<line x1="561.5" y1="374" x2="561.5" y2="524" stroke="rgba(160,240,172,0.56)" stroke-dasharray="1 1"/>
<rect x="561" y="372" width="1" height="2" fill="rgba(160,240,172,0.56)"/>
<rect x="561" y="525" width="1" height="2" fill="rgba(160,240,172,0.56)"/>
<line x1="642.5" y1="374" x2="642.5" y2="524" stroke="rgba(160,240,172,0.56)" stroke-dasharray="1 1"/>
<rect x="642" y="372" width="1" height="2" fill="rgba(160,240,172,0.56)"/>
<rect x="642" y="525" width="1" height="2" fill="rgba(160,240,172,0.56)"/>
<line x1="723.5" y1="374" x2="723.5" y2="524" stroke="rgba(160,240,172,0.56)" stroke-dasharray="1 1"/>
<rect x="723" y="372" width="1" height="2" fill="rgba(160,240,172,0.56)"/>
<rect x="723" y="525" width="1" height="2" fill="rgba(160,240,172,0.56)"/>
<line x1="804.5" y1="374" x2="804.5" y2="524" stroke="rgba(160,240,172,0.56)" stroke-dasharray="1 1"/>
<rect x="804" y="372" width="1" height="2" fill="rgba(160,240,172,0.56)"/>
<rect x="804" y="525" width="1" height="2" fill="rgba(160,240,172,0.56)"/>
</g>
<rect x="499" y="376" width="1" height="153" fill="#222"/>
<polygon points="497,372 503,372 500,367" fill="#fff"/>
<polygon points="827,521.5 827,527.5 832,524.5" fill="#fff"/>
<text x="493" y="528" text-anchor="end" font-family="Liberation Mono" font-size="11" letter-spacing="-0.46" fill="#cccccc">0</text>
<text x="493" y="513" text-anchor="end" font-family="Liberation Mono" font-size="11" letter-spacing="-0.46" fill="#cccccc">10</text>
<text x="493" y="498" text-anchor="end" font-family="Liberation Mono" font-size="11" letter-spacing="-0.46" fill="#cccccc">20</text>
<text x="493" y="483" text-anchor="end" font-family="Liberation Mono" font-size="11" letter-spacing="-0.46" fill="#cccccc">30</text>
<text x="493" y="468" text-anchor="end" font-family="Liberation Mono" font-size="11" letter-spacing="-0.46" fill="#cccccc">40</text>
<text x="493" y="453" text-anchor="end" font-family="Liberation Mono" font-size="11" letter-spacing="-0.46" fill="#cccccc">50</text>
<text x="493" y="438" text-anchor="end" font-family="Liberation Mono" font-size="11" letter-spacing="-0.46" fill="#cccccc">60</text>
<text x="493" y="423" text-anchor="end" font-family="Liberation Mono" font-size="11" letter-spacing="-0.46" fill="#cccccc">70</text>
<text x="493" y="408" text-anchor="end" font-family="Liberation Mono" font-size="11" letter-spacing="-0.46" fill="#cccccc">80</text>
<text x="493" y="393" text-anchor="end" font-family="Liberation Mono" font-size="11" letter-spacing="-0.46" fill="#cccccc">90</text>
<text x="493" y="378" text-anchor="end" font-family="Liberation Mono" font-size="11" letter-spacing="-0.46" fill="#cccccc">100</text>
<text x="562.2" y="537" text-anchor="middle" font-family="Liberation Mono" font-size="11" letter-spacing="-0.46" fill="#cccccc">18:00</text>
<text x="643.2" y="537" text-anchor="middle" font-family="Liberation Mono" font-size="11" letter-spacing="-0.46" fill="#cccccc">00:00</text>
<text x="724.2" y="537" text-anchor="middle" font-family="Liberation Mono" font-size="11" letter-spacing="-0.46" fill="#cccccc">06:00</text>
<text x="805.2" y="537" text-anchor="middle" font-family="Liberation Mono" font-size="11" letter-spacing="-0.46" fill="#cccccc">12:00</text>
<text x="645" y="361" text-anchor="middle" font-family="Liberation Mono" font-size="11.2" letter-spacing="0.28" fill="#cccccc" xml:space="preserve">Processor 3  (1day)</text>
<text transform="translate(448.7,449.3) rotate(-90)" text-anchor="middle" font-family="Liberation Mono" font-size="10.8" letter-spacing="-0.55" fill="#cccccc" xml:space="preserve">Percent (%)</text>
<text transform="translate(843,349) rotate(90)" font-family="Liberation Mono" font-size="9" letter-spacing="-0.4" fill="#4a4a4a">RRDTOOL / TOBI OETIKER</text>
<rect x="448.5" y="546.5" width="7" height="7" fill="#4444ff" stroke="#888" stroke-width="1"/>
<text x="461.5" y="553" font-family="Liberation Mono" font-size="11" letter-spacing="-0.46" fill="#cccccc" xml:space="preserve">user      Cur:  0.3%    Avg:  1.7%    Min:  0.0%    Max: 14.0%</text>
<rect x="448.5" y="558.5" width="7" height="7" fill="#f0f040" stroke="#888" stroke-width="1"/>
<text x="461.5" y="565" font-family="Liberation Mono" font-size="11" letter-spacing="-0.46" fill="#cccccc" xml:space="preserve">nice      Cur:  0.0%    Avg:  0.0%    Min:  0.0%    Max:  0.0%</text>
<rect x="448.5" y="570.5" width="7" height="7" fill="#40f0f0" stroke="#888" stroke-width="1"/>
<text x="461.5" y="577" font-family="Liberation Mono" font-size="11" letter-spacing="-0.46" fill="#cccccc" xml:space="preserve">system    Cur:  3.3%    Avg:  2.8%    Min:  0.0%    Max: 13.2%</text>
<rect x="448.5" y="582.5" width="7" height="7" fill="#f040f0" stroke="#888" stroke-width="1"/>
<text x="461.5" y="589" font-family="Liberation Mono" font-size="11" letter-spacing="-0.46" fill="#cccccc" xml:space="preserve">I/O wait  Cur:  1.6%    Avg:  1.5%    Min:  0.1%    Max: 22.6%</text>
<rect x="448.5" y="594.5" width="7" height="7" fill="#909090" stroke="#888" stroke-width="1"/>
<text x="461.5" y="601" font-family="Liberation Mono" font-size="11" letter-spacing="-0.46" fill="#cccccc" xml:space="preserve">IRQ       Cur:  0.0%    Avg:  0.0%    Min:  0.0%    Max:  0.4%</text>
<rect x="448.5" y="606.5" width="7" height="7" fill="#e09040" stroke="#888" stroke-width="1"/>
<text x="461.5" y="613" font-family="Liberation Mono" font-size="11" letter-spacing="-0.46" fill="#cccccc" xml:space="preserve">softIRQ   Cur:  0.3%    Avg:  0.8%    Min:  0.0%    Max: 11.0%</text>
<rect x="448.5" y="618.5" width="7" height="7" fill="#40e040" stroke="#888" stroke-width="1"/>
<text x="461.5" y="625" font-family="Liberation Mono" font-size="11" letter-spacing="-0.46" fill="#cccccc" xml:space="preserve">steal     Cur:  0.0%    Avg:  0.0%    Min:  0.0%    Max:  0.0%</text>
<rect x="448.5" y="630.5" width="7" height="7" fill="#408840" stroke="#888" stroke-width="1"/>
<text x="461.5" y="637" font-family="Liberation Mono" font-size="11" letter-spacing="-0.46" fill="#cccccc" xml:space="preserve">guest     Cur:  0.0%    Avg:  0.0%    Min:  0.0%    Max:  0.0%</text>
</svg></body></html>
